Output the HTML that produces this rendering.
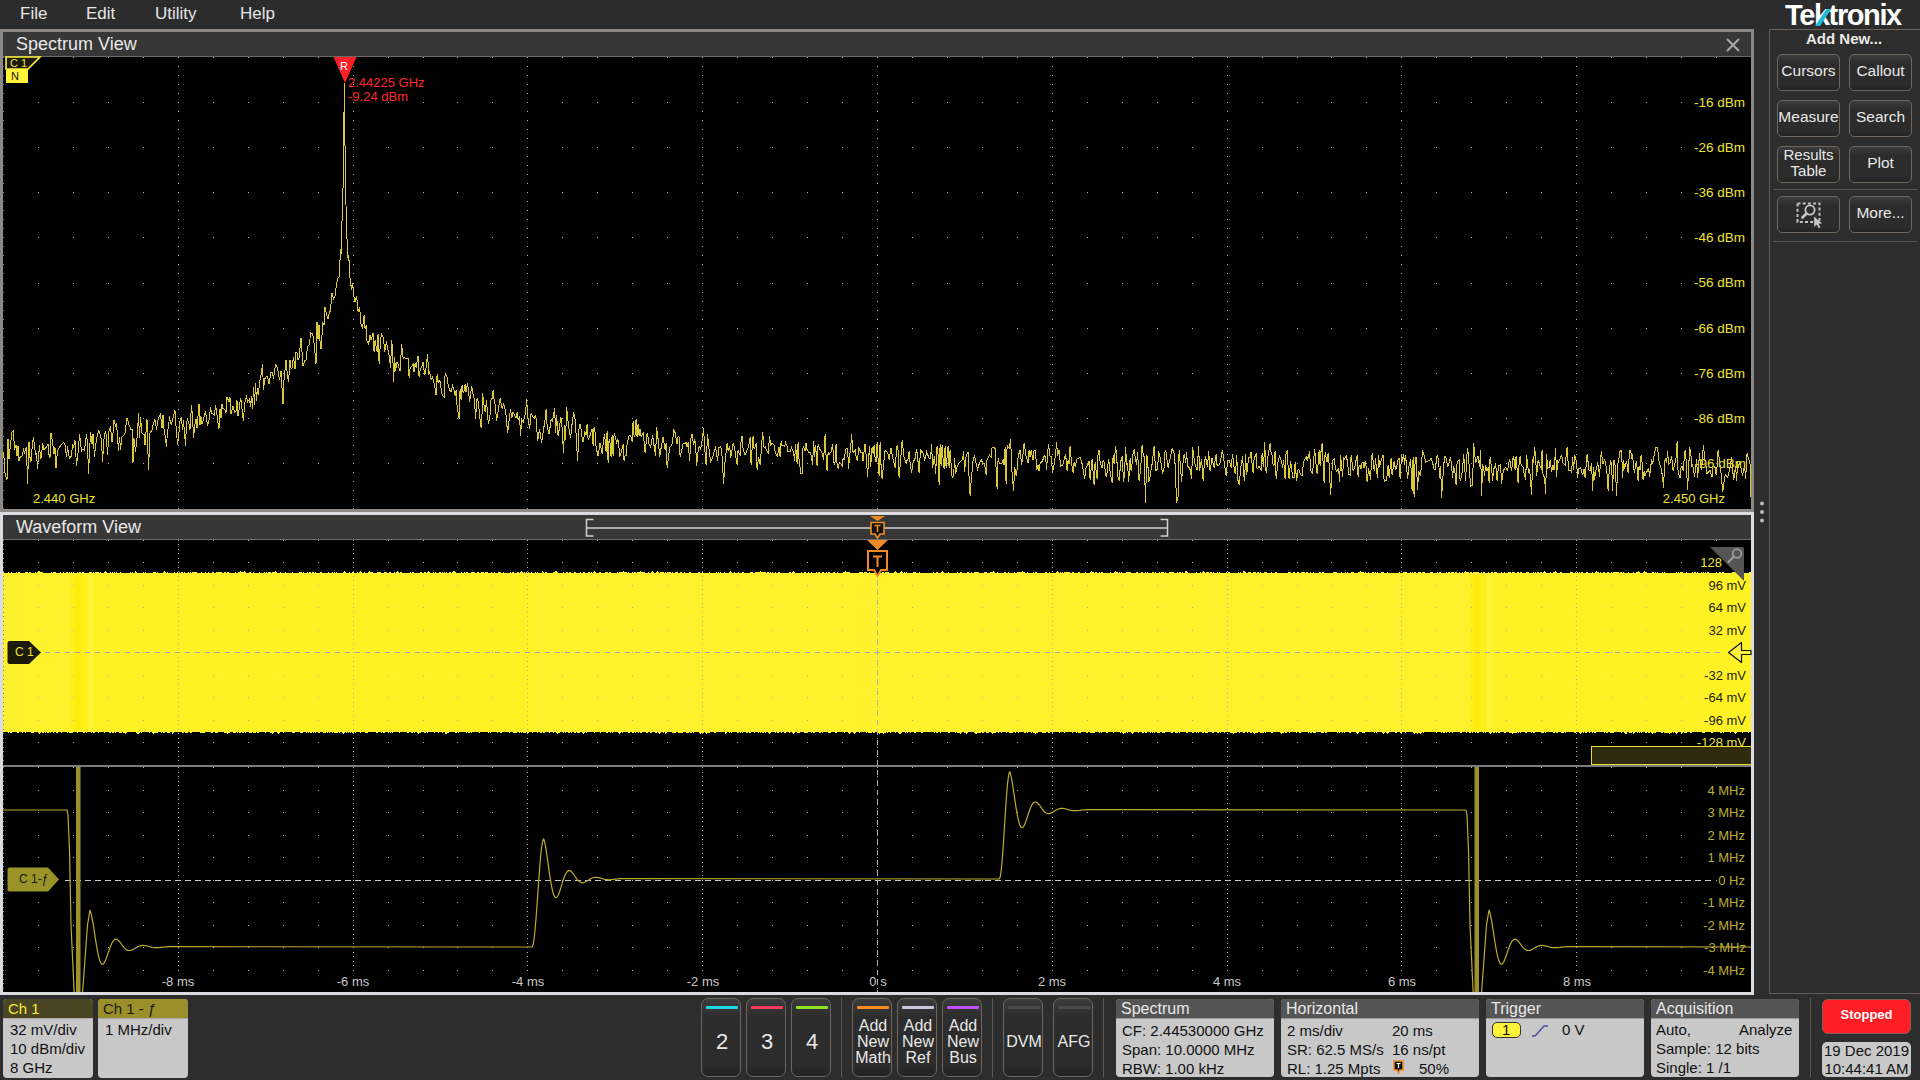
<!DOCTYPE html>
<html><head><meta charset="utf-8"><style>
html,body{margin:0;padding:0;}
body{width:1920px;height:1080px;background:#2d2d2d;position:relative;overflow:hidden;font-family:"Liberation Sans",sans-serif;}
.a{position:absolute;}
.t{position:absolute;white-space:nowrap;line-height:1;}
.btn{position:absolute;box-sizing:border-box;border:1px solid #6f665e;border-radius:5px;background:linear-gradient(#3c3c3c 0%,#2c2c2c 25%,#2c2c2c 85%,#232323 100%);color:#e8e8e8;text-align:center;}
.badge{position:absolute;box-sizing:border-box;border-radius:4px;overflow:hidden;background:#c8c8c8;}
</style></head><body>

<div class="a" style="left:0;top:0;width:1920px;height:29px;background:#2c2c2c"></div>
<div class="t" style="left:20px;top:5px;font-size:17px;color:#e6e6e6">File</div>
<div class="t" style="left:86px;top:5px;font-size:17px;color:#e6e6e6">Edit</div>
<div class="t" style="left:155px;top:5px;font-size:17px;color:#e6e6e6">Utility</div>
<div class="t" style="left:240px;top:5px;font-size:17px;color:#e6e6e6">Help</div>
<div class="a" style="left:0;top:29px;width:1754px;height:483px;background:#8c8886"></div>
<div class="a" style="left:3px;top:32px;width:1748px;height:24px;background:#373737"></div>
<div class="a" style="left:3px;top:56px;width:1748px;height:1px;background:#6a6a6a"></div>
<div class="t" style="left:16px;top:35px;font-size:18px;color:#e8e8e8">Spectrum View</div>
<svg class="a" style="left:1724px;top:36px" width="18" height="18"><path d="M3 3L15 15M15 3L3 15" stroke="#a8a8a8" stroke-width="2"/></svg>
<div class="a" style="left:3px;top:57px;width:1748px;height:452px;background:#000"></div>
<div class="a" style="left:0;top:512px;width:1754px;height:483px;background:#dcdce0"></div>
<div class="a" style="left:3px;top:515px;width:1748px;height:24px;background:#373737"></div>
<div class="a" style="left:3px;top:539px;width:1748px;height:1px;background:#6a6a6a"></div>
<div class="t" style="left:16px;top:518px;font-size:18px;color:#e8e8e8">Waveform View</div>
<div class="a" style="left:3px;top:540px;width:1748px;height:452px;background:#000"></div>
<div class="t" style="right:174px;top:457px;font-size:13.5px;color:#ece232;text-align:right">-96 dBm</div>
<svg class="a" style="left:0;top:0" width="1920" height="1080">
<path d="M38 57h1v1h-1zM73 57h1v1h-1zM108 57h1v1h-1zM143 57h1v1h-1zM178 57h1v1h-1zM213 57h1v1h-1zM248 57h1v1h-1zM283 57h1v1h-1zM318 57h1v1h-1zM353 57h1v1h-1zM388 57h1v1h-1zM423 57h1v1h-1zM457 57h1v1h-1zM492 57h1v1h-1zM527 57h1v1h-1zM562 57h1v1h-1zM597 57h1v1h-1zM632 57h1v1h-1zM667 57h1v1h-1zM702 57h1v1h-1zM737 57h1v1h-1zM772 57h1v1h-1zM807 57h1v1h-1zM842 57h1v1h-1zM877 57h1v1h-1zM912 57h1v1h-1zM947 57h1v1h-1zM982 57h1v1h-1zM1017 57h1v1h-1zM1052 57h1v1h-1zM1087 57h1v1h-1zM1122 57h1v1h-1zM1157 57h1v1h-1zM1192 57h1v1h-1zM1227 57h1v1h-1zM1262 57h1v1h-1zM1297 57h1v1h-1zM1331 57h1v1h-1zM1366 57h1v1h-1zM1401 57h1v1h-1zM1436 57h1v1h-1zM1471 57h1v1h-1zM1506 57h1v1h-1zM1541 57h1v1h-1zM1576 57h1v1h-1zM1611 57h1v1h-1zM1646 57h1v1h-1zM1681 57h1v1h-1zM1716 57h1v1h-1zM38 102h1v1h-1zM73 102h1v1h-1zM108 102h1v1h-1zM143 102h1v1h-1zM178 102h1v1h-1zM213 102h1v1h-1zM248 102h1v1h-1zM283 102h1v1h-1zM318 102h1v1h-1zM353 102h1v1h-1zM388 102h1v1h-1zM423 102h1v1h-1zM457 102h1v1h-1zM492 102h1v1h-1zM527 102h1v1h-1zM562 102h1v1h-1zM597 102h1v1h-1zM632 102h1v1h-1zM667 102h1v1h-1zM702 102h1v1h-1zM737 102h1v1h-1zM772 102h1v1h-1zM807 102h1v1h-1zM842 102h1v1h-1zM877 102h1v1h-1zM912 102h1v1h-1zM947 102h1v1h-1zM982 102h1v1h-1zM1017 102h1v1h-1zM1052 102h1v1h-1zM1087 102h1v1h-1zM1122 102h1v1h-1zM1157 102h1v1h-1zM1192 102h1v1h-1zM1227 102h1v1h-1zM1262 102h1v1h-1zM1297 102h1v1h-1zM1331 102h1v1h-1zM1366 102h1v1h-1zM1401 102h1v1h-1zM1436 102h1v1h-1zM1471 102h1v1h-1zM1506 102h1v1h-1zM1541 102h1v1h-1zM1576 102h1v1h-1zM1611 102h1v1h-1zM1646 102h1v1h-1zM1681 102h1v1h-1zM1716 102h1v1h-1zM38 147h1v1h-1zM73 147h1v1h-1zM108 147h1v1h-1zM143 147h1v1h-1zM178 147h1v1h-1zM213 147h1v1h-1zM248 147h1v1h-1zM283 147h1v1h-1zM318 147h1v1h-1zM353 147h1v1h-1zM388 147h1v1h-1zM423 147h1v1h-1zM457 147h1v1h-1zM492 147h1v1h-1zM527 147h1v1h-1zM562 147h1v1h-1zM597 147h1v1h-1zM632 147h1v1h-1zM667 147h1v1h-1zM702 147h1v1h-1zM737 147h1v1h-1zM772 147h1v1h-1zM807 147h1v1h-1zM842 147h1v1h-1zM877 147h1v1h-1zM912 147h1v1h-1zM947 147h1v1h-1zM982 147h1v1h-1zM1017 147h1v1h-1zM1052 147h1v1h-1zM1087 147h1v1h-1zM1122 147h1v1h-1zM1157 147h1v1h-1zM1192 147h1v1h-1zM1227 147h1v1h-1zM1262 147h1v1h-1zM1297 147h1v1h-1zM1331 147h1v1h-1zM1366 147h1v1h-1zM1401 147h1v1h-1zM1436 147h1v1h-1zM1471 147h1v1h-1zM1506 147h1v1h-1zM1541 147h1v1h-1zM1576 147h1v1h-1zM1611 147h1v1h-1zM1646 147h1v1h-1zM1681 147h1v1h-1zM1716 147h1v1h-1zM38 192h1v1h-1zM73 192h1v1h-1zM108 192h1v1h-1zM143 192h1v1h-1zM178 192h1v1h-1zM213 192h1v1h-1zM248 192h1v1h-1zM283 192h1v1h-1zM318 192h1v1h-1zM353 192h1v1h-1zM388 192h1v1h-1zM423 192h1v1h-1zM457 192h1v1h-1zM492 192h1v1h-1zM527 192h1v1h-1zM562 192h1v1h-1zM597 192h1v1h-1zM632 192h1v1h-1zM667 192h1v1h-1zM702 192h1v1h-1zM737 192h1v1h-1zM772 192h1v1h-1zM807 192h1v1h-1zM842 192h1v1h-1zM877 192h1v1h-1zM912 192h1v1h-1zM947 192h1v1h-1zM982 192h1v1h-1zM1017 192h1v1h-1zM1052 192h1v1h-1zM1087 192h1v1h-1zM1122 192h1v1h-1zM1157 192h1v1h-1zM1192 192h1v1h-1zM1227 192h1v1h-1zM1262 192h1v1h-1zM1297 192h1v1h-1zM1331 192h1v1h-1zM1366 192h1v1h-1zM1401 192h1v1h-1zM1436 192h1v1h-1zM1471 192h1v1h-1zM1506 192h1v1h-1zM1541 192h1v1h-1zM1576 192h1v1h-1zM1611 192h1v1h-1zM1646 192h1v1h-1zM1681 192h1v1h-1zM1716 192h1v1h-1zM38 237h1v1h-1zM73 237h1v1h-1zM108 237h1v1h-1zM143 237h1v1h-1zM178 237h1v1h-1zM213 237h1v1h-1zM248 237h1v1h-1zM283 237h1v1h-1zM318 237h1v1h-1zM353 237h1v1h-1zM388 237h1v1h-1zM423 237h1v1h-1zM457 237h1v1h-1zM492 237h1v1h-1zM527 237h1v1h-1zM562 237h1v1h-1zM597 237h1v1h-1zM632 237h1v1h-1zM667 237h1v1h-1zM702 237h1v1h-1zM737 237h1v1h-1zM772 237h1v1h-1zM807 237h1v1h-1zM842 237h1v1h-1zM877 237h1v1h-1zM912 237h1v1h-1zM947 237h1v1h-1zM982 237h1v1h-1zM1017 237h1v1h-1zM1052 237h1v1h-1zM1087 237h1v1h-1zM1122 237h1v1h-1zM1157 237h1v1h-1zM1192 237h1v1h-1zM1227 237h1v1h-1zM1262 237h1v1h-1zM1297 237h1v1h-1zM1331 237h1v1h-1zM1366 237h1v1h-1zM1401 237h1v1h-1zM1436 237h1v1h-1zM1471 237h1v1h-1zM1506 237h1v1h-1zM1541 237h1v1h-1zM1576 237h1v1h-1zM1611 237h1v1h-1zM1646 237h1v1h-1zM1681 237h1v1h-1zM1716 237h1v1h-1zM38 283h1v1h-1zM73 283h1v1h-1zM108 283h1v1h-1zM143 283h1v1h-1zM178 283h1v1h-1zM213 283h1v1h-1zM248 283h1v1h-1zM283 283h1v1h-1zM318 283h1v1h-1zM353 283h1v1h-1zM388 283h1v1h-1zM423 283h1v1h-1zM457 283h1v1h-1zM492 283h1v1h-1zM527 283h1v1h-1zM562 283h1v1h-1zM597 283h1v1h-1zM632 283h1v1h-1zM667 283h1v1h-1zM702 283h1v1h-1zM737 283h1v1h-1zM772 283h1v1h-1zM807 283h1v1h-1zM842 283h1v1h-1zM877 283h1v1h-1zM912 283h1v1h-1zM947 283h1v1h-1zM982 283h1v1h-1zM1017 283h1v1h-1zM1052 283h1v1h-1zM1087 283h1v1h-1zM1122 283h1v1h-1zM1157 283h1v1h-1zM1192 283h1v1h-1zM1227 283h1v1h-1zM1262 283h1v1h-1zM1297 283h1v1h-1zM1331 283h1v1h-1zM1366 283h1v1h-1zM1401 283h1v1h-1zM1436 283h1v1h-1zM1471 283h1v1h-1zM1506 283h1v1h-1zM1541 283h1v1h-1zM1576 283h1v1h-1zM1611 283h1v1h-1zM1646 283h1v1h-1zM1681 283h1v1h-1zM1716 283h1v1h-1zM38 328h1v1h-1zM73 328h1v1h-1zM108 328h1v1h-1zM143 328h1v1h-1zM178 328h1v1h-1zM213 328h1v1h-1zM248 328h1v1h-1zM283 328h1v1h-1zM318 328h1v1h-1zM353 328h1v1h-1zM388 328h1v1h-1zM423 328h1v1h-1zM457 328h1v1h-1zM492 328h1v1h-1zM527 328h1v1h-1zM562 328h1v1h-1zM597 328h1v1h-1zM632 328h1v1h-1zM667 328h1v1h-1zM702 328h1v1h-1zM737 328h1v1h-1zM772 328h1v1h-1zM807 328h1v1h-1zM842 328h1v1h-1zM877 328h1v1h-1zM912 328h1v1h-1zM947 328h1v1h-1zM982 328h1v1h-1zM1017 328h1v1h-1zM1052 328h1v1h-1zM1087 328h1v1h-1zM1122 328h1v1h-1zM1157 328h1v1h-1zM1192 328h1v1h-1zM1227 328h1v1h-1zM1262 328h1v1h-1zM1297 328h1v1h-1zM1331 328h1v1h-1zM1366 328h1v1h-1zM1401 328h1v1h-1zM1436 328h1v1h-1zM1471 328h1v1h-1zM1506 328h1v1h-1zM1541 328h1v1h-1zM1576 328h1v1h-1zM1611 328h1v1h-1zM1646 328h1v1h-1zM1681 328h1v1h-1zM1716 328h1v1h-1zM38 373h1v1h-1zM73 373h1v1h-1zM108 373h1v1h-1zM143 373h1v1h-1zM178 373h1v1h-1zM213 373h1v1h-1zM248 373h1v1h-1zM283 373h1v1h-1zM318 373h1v1h-1zM353 373h1v1h-1zM388 373h1v1h-1zM423 373h1v1h-1zM457 373h1v1h-1zM492 373h1v1h-1zM527 373h1v1h-1zM562 373h1v1h-1zM597 373h1v1h-1zM632 373h1v1h-1zM667 373h1v1h-1zM702 373h1v1h-1zM737 373h1v1h-1zM772 373h1v1h-1zM807 373h1v1h-1zM842 373h1v1h-1zM877 373h1v1h-1zM912 373h1v1h-1zM947 373h1v1h-1zM982 373h1v1h-1zM1017 373h1v1h-1zM1052 373h1v1h-1zM1087 373h1v1h-1zM1122 373h1v1h-1zM1157 373h1v1h-1zM1192 373h1v1h-1zM1227 373h1v1h-1zM1262 373h1v1h-1zM1297 373h1v1h-1zM1331 373h1v1h-1zM1366 373h1v1h-1zM1401 373h1v1h-1zM1436 373h1v1h-1zM1471 373h1v1h-1zM1506 373h1v1h-1zM1541 373h1v1h-1zM1576 373h1v1h-1zM1611 373h1v1h-1zM1646 373h1v1h-1zM1681 373h1v1h-1zM1716 373h1v1h-1zM38 418h1v1h-1zM73 418h1v1h-1zM108 418h1v1h-1zM143 418h1v1h-1zM178 418h1v1h-1zM213 418h1v1h-1zM248 418h1v1h-1zM283 418h1v1h-1zM318 418h1v1h-1zM353 418h1v1h-1zM388 418h1v1h-1zM423 418h1v1h-1zM457 418h1v1h-1zM492 418h1v1h-1zM527 418h1v1h-1zM562 418h1v1h-1zM597 418h1v1h-1zM632 418h1v1h-1zM667 418h1v1h-1zM702 418h1v1h-1zM737 418h1v1h-1zM772 418h1v1h-1zM807 418h1v1h-1zM842 418h1v1h-1zM877 418h1v1h-1zM912 418h1v1h-1zM947 418h1v1h-1zM982 418h1v1h-1zM1017 418h1v1h-1zM1052 418h1v1h-1zM1087 418h1v1h-1zM1122 418h1v1h-1zM1157 418h1v1h-1zM1192 418h1v1h-1zM1227 418h1v1h-1zM1262 418h1v1h-1zM1297 418h1v1h-1zM1331 418h1v1h-1zM1366 418h1v1h-1zM1401 418h1v1h-1zM1436 418h1v1h-1zM1471 418h1v1h-1zM1506 418h1v1h-1zM1541 418h1v1h-1zM1576 418h1v1h-1zM1611 418h1v1h-1zM1646 418h1v1h-1zM1681 418h1v1h-1zM1716 418h1v1h-1zM38 463h1v1h-1zM73 463h1v1h-1zM108 463h1v1h-1zM143 463h1v1h-1zM178 463h1v1h-1zM213 463h1v1h-1zM248 463h1v1h-1zM283 463h1v1h-1zM318 463h1v1h-1zM353 463h1v1h-1zM388 463h1v1h-1zM423 463h1v1h-1zM457 463h1v1h-1zM492 463h1v1h-1zM527 463h1v1h-1zM562 463h1v1h-1zM597 463h1v1h-1zM632 463h1v1h-1zM667 463h1v1h-1zM702 463h1v1h-1zM737 463h1v1h-1zM772 463h1v1h-1zM807 463h1v1h-1zM842 463h1v1h-1zM877 463h1v1h-1zM912 463h1v1h-1zM947 463h1v1h-1zM982 463h1v1h-1zM1017 463h1v1h-1zM1052 463h1v1h-1zM1087 463h1v1h-1zM1122 463h1v1h-1zM1157 463h1v1h-1zM1192 463h1v1h-1zM1227 463h1v1h-1zM1262 463h1v1h-1zM1297 463h1v1h-1zM1331 463h1v1h-1zM1366 463h1v1h-1zM1401 463h1v1h-1zM1436 463h1v1h-1zM1471 463h1v1h-1zM1506 463h1v1h-1zM1541 463h1v1h-1zM1576 463h1v1h-1zM1611 463h1v1h-1zM1646 463h1v1h-1zM1681 463h1v1h-1zM1716 463h1v1h-1z" fill="#b0b0b0"/>
<path d="M178 57h1v1h-1zM178 66h1v1h-1zM178 75h1v1h-1zM178 84h1v1h-1zM178 93h1v1h-1zM178 102h1v1h-1zM178 111h1v1h-1zM178 120h1v1h-1zM178 129h1v1h-1zM178 138h1v1h-1zM178 147h1v1h-1zM178 156h1v1h-1zM178 165h1v1h-1zM178 174h1v1h-1zM178 183h1v1h-1zM178 192h1v1h-1zM178 201h1v1h-1zM178 210h1v1h-1zM178 219h1v1h-1zM178 228h1v1h-1zM178 237h1v1h-1zM178 246h1v1h-1zM178 255h1v1h-1zM178 264h1v1h-1zM178 273h1v1h-1zM178 283h1v1h-1zM178 292h1v1h-1zM178 301h1v1h-1zM178 310h1v1h-1zM178 319h1v1h-1zM178 328h1v1h-1zM178 337h1v1h-1zM178 346h1v1h-1zM178 355h1v1h-1zM178 364h1v1h-1zM178 373h1v1h-1zM178 382h1v1h-1zM178 391h1v1h-1zM178 400h1v1h-1zM178 409h1v1h-1zM178 418h1v1h-1zM178 427h1v1h-1zM178 436h1v1h-1zM178 445h1v1h-1zM178 454h1v1h-1zM178 463h1v1h-1zM178 472h1v1h-1zM178 481h1v1h-1zM178 490h1v1h-1zM178 499h1v1h-1zM178 508h1v1h-1zM353 57h1v1h-1zM353 66h1v1h-1zM353 75h1v1h-1zM353 84h1v1h-1zM353 93h1v1h-1zM353 102h1v1h-1zM353 111h1v1h-1zM353 120h1v1h-1zM353 129h1v1h-1zM353 138h1v1h-1zM353 147h1v1h-1zM353 156h1v1h-1zM353 165h1v1h-1zM353 174h1v1h-1zM353 183h1v1h-1zM353 192h1v1h-1zM353 201h1v1h-1zM353 210h1v1h-1zM353 219h1v1h-1zM353 228h1v1h-1zM353 237h1v1h-1zM353 246h1v1h-1zM353 255h1v1h-1zM353 264h1v1h-1zM353 273h1v1h-1zM353 283h1v1h-1zM353 292h1v1h-1zM353 301h1v1h-1zM353 310h1v1h-1zM353 319h1v1h-1zM353 328h1v1h-1zM353 337h1v1h-1zM353 346h1v1h-1zM353 355h1v1h-1zM353 364h1v1h-1zM353 373h1v1h-1zM353 382h1v1h-1zM353 391h1v1h-1zM353 400h1v1h-1zM353 409h1v1h-1zM353 418h1v1h-1zM353 427h1v1h-1zM353 436h1v1h-1zM353 445h1v1h-1zM353 454h1v1h-1zM353 463h1v1h-1zM353 472h1v1h-1zM353 481h1v1h-1zM353 490h1v1h-1zM353 499h1v1h-1zM353 508h1v1h-1zM527 57h1v1h-1zM527 66h1v1h-1zM527 75h1v1h-1zM527 84h1v1h-1zM527 93h1v1h-1zM527 102h1v1h-1zM527 111h1v1h-1zM527 120h1v1h-1zM527 129h1v1h-1zM527 138h1v1h-1zM527 147h1v1h-1zM527 156h1v1h-1zM527 165h1v1h-1zM527 174h1v1h-1zM527 183h1v1h-1zM527 192h1v1h-1zM527 201h1v1h-1zM527 210h1v1h-1zM527 219h1v1h-1zM527 228h1v1h-1zM527 237h1v1h-1zM527 246h1v1h-1zM527 255h1v1h-1zM527 264h1v1h-1zM527 273h1v1h-1zM527 283h1v1h-1zM527 292h1v1h-1zM527 301h1v1h-1zM527 310h1v1h-1zM527 319h1v1h-1zM527 328h1v1h-1zM527 337h1v1h-1zM527 346h1v1h-1zM527 355h1v1h-1zM527 364h1v1h-1zM527 373h1v1h-1zM527 382h1v1h-1zM527 391h1v1h-1zM527 400h1v1h-1zM527 409h1v1h-1zM527 418h1v1h-1zM527 427h1v1h-1zM527 436h1v1h-1zM527 445h1v1h-1zM527 454h1v1h-1zM527 463h1v1h-1zM527 472h1v1h-1zM527 481h1v1h-1zM527 490h1v1h-1zM527 499h1v1h-1zM527 508h1v1h-1zM702 57h1v1h-1zM702 66h1v1h-1zM702 75h1v1h-1zM702 84h1v1h-1zM702 93h1v1h-1zM702 102h1v1h-1zM702 111h1v1h-1zM702 120h1v1h-1zM702 129h1v1h-1zM702 138h1v1h-1zM702 147h1v1h-1zM702 156h1v1h-1zM702 165h1v1h-1zM702 174h1v1h-1zM702 183h1v1h-1zM702 192h1v1h-1zM702 201h1v1h-1zM702 210h1v1h-1zM702 219h1v1h-1zM702 228h1v1h-1zM702 237h1v1h-1zM702 246h1v1h-1zM702 255h1v1h-1zM702 264h1v1h-1zM702 273h1v1h-1zM702 283h1v1h-1zM702 292h1v1h-1zM702 301h1v1h-1zM702 310h1v1h-1zM702 319h1v1h-1zM702 328h1v1h-1zM702 337h1v1h-1zM702 346h1v1h-1zM702 355h1v1h-1zM702 364h1v1h-1zM702 373h1v1h-1zM702 382h1v1h-1zM702 391h1v1h-1zM702 400h1v1h-1zM702 409h1v1h-1zM702 418h1v1h-1zM702 427h1v1h-1zM702 436h1v1h-1zM702 445h1v1h-1zM702 454h1v1h-1zM702 463h1v1h-1zM702 472h1v1h-1zM702 481h1v1h-1zM702 490h1v1h-1zM702 499h1v1h-1zM702 508h1v1h-1zM877 57h1v1h-1zM877 66h1v1h-1zM877 75h1v1h-1zM877 84h1v1h-1zM877 93h1v1h-1zM877 102h1v1h-1zM877 111h1v1h-1zM877 120h1v1h-1zM877 129h1v1h-1zM877 138h1v1h-1zM877 147h1v1h-1zM877 156h1v1h-1zM877 165h1v1h-1zM877 174h1v1h-1zM877 183h1v1h-1zM877 192h1v1h-1zM877 201h1v1h-1zM877 210h1v1h-1zM877 219h1v1h-1zM877 228h1v1h-1zM877 237h1v1h-1zM877 246h1v1h-1zM877 255h1v1h-1zM877 264h1v1h-1zM877 273h1v1h-1zM877 283h1v1h-1zM877 292h1v1h-1zM877 301h1v1h-1zM877 310h1v1h-1zM877 319h1v1h-1zM877 328h1v1h-1zM877 337h1v1h-1zM877 346h1v1h-1zM877 355h1v1h-1zM877 364h1v1h-1zM877 373h1v1h-1zM877 382h1v1h-1zM877 391h1v1h-1zM877 400h1v1h-1zM877 409h1v1h-1zM877 418h1v1h-1zM877 427h1v1h-1zM877 436h1v1h-1zM877 445h1v1h-1zM877 454h1v1h-1zM877 463h1v1h-1zM877 472h1v1h-1zM877 481h1v1h-1zM877 490h1v1h-1zM877 499h1v1h-1zM877 508h1v1h-1zM1052 57h1v1h-1zM1052 66h1v1h-1zM1052 75h1v1h-1zM1052 84h1v1h-1zM1052 93h1v1h-1zM1052 102h1v1h-1zM1052 111h1v1h-1zM1052 120h1v1h-1zM1052 129h1v1h-1zM1052 138h1v1h-1zM1052 147h1v1h-1zM1052 156h1v1h-1zM1052 165h1v1h-1zM1052 174h1v1h-1zM1052 183h1v1h-1zM1052 192h1v1h-1zM1052 201h1v1h-1zM1052 210h1v1h-1zM1052 219h1v1h-1zM1052 228h1v1h-1zM1052 237h1v1h-1zM1052 246h1v1h-1zM1052 255h1v1h-1zM1052 264h1v1h-1zM1052 273h1v1h-1zM1052 283h1v1h-1zM1052 292h1v1h-1zM1052 301h1v1h-1zM1052 310h1v1h-1zM1052 319h1v1h-1zM1052 328h1v1h-1zM1052 337h1v1h-1zM1052 346h1v1h-1zM1052 355h1v1h-1zM1052 364h1v1h-1zM1052 373h1v1h-1zM1052 382h1v1h-1zM1052 391h1v1h-1zM1052 400h1v1h-1zM1052 409h1v1h-1zM1052 418h1v1h-1zM1052 427h1v1h-1zM1052 436h1v1h-1zM1052 445h1v1h-1zM1052 454h1v1h-1zM1052 463h1v1h-1zM1052 472h1v1h-1zM1052 481h1v1h-1zM1052 490h1v1h-1zM1052 499h1v1h-1zM1052 508h1v1h-1zM1227 57h1v1h-1zM1227 66h1v1h-1zM1227 75h1v1h-1zM1227 84h1v1h-1zM1227 93h1v1h-1zM1227 102h1v1h-1zM1227 111h1v1h-1zM1227 120h1v1h-1zM1227 129h1v1h-1zM1227 138h1v1h-1zM1227 147h1v1h-1zM1227 156h1v1h-1zM1227 165h1v1h-1zM1227 174h1v1h-1zM1227 183h1v1h-1zM1227 192h1v1h-1zM1227 201h1v1h-1zM1227 210h1v1h-1zM1227 219h1v1h-1zM1227 228h1v1h-1zM1227 237h1v1h-1zM1227 246h1v1h-1zM1227 255h1v1h-1zM1227 264h1v1h-1zM1227 273h1v1h-1zM1227 283h1v1h-1zM1227 292h1v1h-1zM1227 301h1v1h-1zM1227 310h1v1h-1zM1227 319h1v1h-1zM1227 328h1v1h-1zM1227 337h1v1h-1zM1227 346h1v1h-1zM1227 355h1v1h-1zM1227 364h1v1h-1zM1227 373h1v1h-1zM1227 382h1v1h-1zM1227 391h1v1h-1zM1227 400h1v1h-1zM1227 409h1v1h-1zM1227 418h1v1h-1zM1227 427h1v1h-1zM1227 436h1v1h-1zM1227 445h1v1h-1zM1227 454h1v1h-1zM1227 463h1v1h-1zM1227 472h1v1h-1zM1227 481h1v1h-1zM1227 490h1v1h-1zM1227 499h1v1h-1zM1227 508h1v1h-1zM1401 57h1v1h-1zM1401 66h1v1h-1zM1401 75h1v1h-1zM1401 84h1v1h-1zM1401 93h1v1h-1zM1401 102h1v1h-1zM1401 111h1v1h-1zM1401 120h1v1h-1zM1401 129h1v1h-1zM1401 138h1v1h-1zM1401 147h1v1h-1zM1401 156h1v1h-1zM1401 165h1v1h-1zM1401 174h1v1h-1zM1401 183h1v1h-1zM1401 192h1v1h-1zM1401 201h1v1h-1zM1401 210h1v1h-1zM1401 219h1v1h-1zM1401 228h1v1h-1zM1401 237h1v1h-1zM1401 246h1v1h-1zM1401 255h1v1h-1zM1401 264h1v1h-1zM1401 273h1v1h-1zM1401 283h1v1h-1zM1401 292h1v1h-1zM1401 301h1v1h-1zM1401 310h1v1h-1zM1401 319h1v1h-1zM1401 328h1v1h-1zM1401 337h1v1h-1zM1401 346h1v1h-1zM1401 355h1v1h-1zM1401 364h1v1h-1zM1401 373h1v1h-1zM1401 382h1v1h-1zM1401 391h1v1h-1zM1401 400h1v1h-1zM1401 409h1v1h-1zM1401 418h1v1h-1zM1401 427h1v1h-1zM1401 436h1v1h-1zM1401 445h1v1h-1zM1401 454h1v1h-1zM1401 463h1v1h-1zM1401 472h1v1h-1zM1401 481h1v1h-1zM1401 490h1v1h-1zM1401 499h1v1h-1zM1401 508h1v1h-1zM1576 57h1v1h-1zM1576 66h1v1h-1zM1576 75h1v1h-1zM1576 84h1v1h-1zM1576 93h1v1h-1zM1576 102h1v1h-1zM1576 111h1v1h-1zM1576 120h1v1h-1zM1576 129h1v1h-1zM1576 138h1v1h-1zM1576 147h1v1h-1zM1576 156h1v1h-1zM1576 165h1v1h-1zM1576 174h1v1h-1zM1576 183h1v1h-1zM1576 192h1v1h-1zM1576 201h1v1h-1zM1576 210h1v1h-1zM1576 219h1v1h-1zM1576 228h1v1h-1zM1576 237h1v1h-1zM1576 246h1v1h-1zM1576 255h1v1h-1zM1576 264h1v1h-1zM1576 273h1v1h-1zM1576 283h1v1h-1zM1576 292h1v1h-1zM1576 301h1v1h-1zM1576 310h1v1h-1zM1576 319h1v1h-1zM1576 328h1v1h-1zM1576 337h1v1h-1zM1576 346h1v1h-1zM1576 355h1v1h-1zM1576 364h1v1h-1zM1576 373h1v1h-1zM1576 382h1v1h-1zM1576 391h1v1h-1zM1576 400h1v1h-1zM1576 409h1v1h-1zM1576 418h1v1h-1zM1576 427h1v1h-1zM1576 436h1v1h-1zM1576 445h1v1h-1zM1576 454h1v1h-1zM1576 463h1v1h-1zM1576 472h1v1h-1zM1576 481h1v1h-1zM1576 490h1v1h-1zM1576 499h1v1h-1zM1576 508h1v1h-1z" fill="#b0b0b0"/>
<path d="M3 57h1v1h-1zM3 66h1v1h-1zM3 75h1v1h-1zM3 84h1v1h-1zM3 93h1v1h-1zM3 102h1v1h-1zM3 111h1v1h-1zM3 120h1v1h-1zM3 129h1v1h-1zM3 138h1v1h-1zM3 147h1v1h-1zM3 156h1v1h-1zM3 165h1v1h-1zM3 174h1v1h-1zM3 183h1v1h-1zM3 192h1v1h-1zM3 201h1v1h-1zM3 210h1v1h-1zM3 219h1v1h-1zM3 228h1v1h-1zM3 237h1v1h-1zM3 246h1v1h-1zM3 255h1v1h-1zM3 264h1v1h-1zM3 273h1v1h-1zM3 283h1v1h-1zM3 292h1v1h-1zM3 301h1v1h-1zM3 310h1v1h-1zM3 319h1v1h-1zM3 328h1v1h-1zM3 337h1v1h-1zM3 346h1v1h-1zM3 355h1v1h-1zM3 364h1v1h-1zM3 373h1v1h-1zM3 382h1v1h-1zM3 391h1v1h-1zM3 400h1v1h-1zM3 409h1v1h-1zM3 418h1v1h-1zM3 427h1v1h-1zM3 436h1v1h-1zM3 445h1v1h-1zM3 454h1v1h-1zM3 463h1v1h-1zM3 472h1v1h-1zM3 481h1v1h-1zM3 490h1v1h-1zM3 499h1v1h-1zM3 508h1v1h-1z" fill="#808080"/>
<polyline points="3.0,452.0 4.0,457.8 5.0,472.8 7.0,480.2 8.0,438.6 9.0,459.1 10.0,448.9 12.0,431.7 13.5,430.7 14.5,450.2 16.0,444.9 17.0,456.1 18.0,445.6 19.0,460.9 20.0,457.5 21.0,456.5 22.0,456.3 23.5,450.2 24.5,453.6 25.5,448.3 26.5,447.3 27.5,483.6 29.0,441.7 30.0,457.5 31.0,461.6 32.5,442.8 33.5,437.5 35.5,454.5 36.5,453.8 37.5,468.5 39.5,445.4 40.5,458.6 41.5,457.5 42.5,442.6 44.0,450.1 45.0,448.4 46.0,447.7 48.0,443.7 49.0,454.5 50.0,457.7 51.0,432.7 52.5,442.0 54.0,454.1 55.0,447.3 56.0,468.2 57.5,450.6 59.0,447.9 60.0,446.5 61.0,445.3 63.0,443.0 64.0,442.8 65.0,445.4 66.5,457.3 67.5,446.3 69.5,459.2 70.5,456.2 71.5,456.1 72.5,443.7 73.5,447.4 75.0,440.4 76.5,465.6 78.5,449.0 79.5,434.0 81.5,451.0 82.5,449.2 84.5,450.0 86.5,434.2 87.5,443.3 88.5,474.2 90.5,432.4 92.0,444.2 93.0,434.1 94.5,456.8 95.5,445.5 97.0,436.8 98.5,431.0 99.5,432.0 101.5,439.9 102.5,461.6 104.0,439.2 105.5,430.8 106.5,437.8 107.5,454.9 109.0,431.4 110.5,425.8 112.0,442.4 113.0,433.2 114.0,420.2 115.5,425.9 116.5,422.8 117.5,437.0 118.5,450.5 119.5,436.6 120.5,449.7 122.0,436.8 124.0,435.3 125.0,432.8 127.0,417.7 129.0,424.6 131.0,429.5 132.0,428.8 133.0,463.0 134.0,438.5 135.5,451.7 137.5,433.9 138.5,413.3 139.5,437.7 140.5,417.2 142.0,433.2 144.0,434.4 145.0,445.2 147.0,419.4 148.5,470.4 150.0,433.1 152.0,429.8 153.0,424.9 155.0,419.6 156.5,429.5 157.5,423.0 158.5,417.9 160.5,414.0 162.0,428.2 163.0,415.1 164.0,429.2 165.0,434.5 166.5,446.5 167.5,431.2 168.5,427.6 169.5,415.9 170.5,423.5 171.5,424.4 172.5,419.3 173.5,416.2 175.0,410.4 176.0,425.8 177.5,444.6 178.5,436.9 180.0,421.4 181.5,417.0 182.5,430.2 183.5,420.1 185.5,445.5 186.5,422.8 187.5,419.6 189.0,424.1 190.0,429.8 191.5,405.4 192.5,416.5 193.5,437.8 195.0,423.8 196.0,419.3 197.0,427.9 199.0,404.1 200.0,425.1 201.0,416.5 202.0,423.8 203.5,419.3 205.5,411.5 207.5,425.7 209.5,418.0 210.5,407.0 211.5,412.9 213.5,414.4 214.5,415.6 215.5,405.1 216.5,411.0 217.5,419.2 219.0,428.9 220.0,408.8 221.0,418.1 222.0,404.2 223.0,408.5 225.0,409.9 226.0,412.7 227.0,396.6 229.0,402.3 230.0,397.4 231.0,413.6 233.0,405.9 234.5,412.5 236.0,410.9 237.0,400.3 238.0,416.1 239.5,406.8 240.5,397.8 241.5,403.1 242.5,413.8 243.5,421.4 244.5,404.2 246.5,395.5 247.5,402.1 249.5,399.0 250.5,407.3 251.5,395.7 252.5,409.3 253.5,386.7 254.5,405.0 255.5,383.2 256.5,400.5 257.5,388.0 258.5,395.2 259.5,380.7 260.5,379.1 262.5,364.3 263.5,390.0 264.5,379.8 265.5,377.3 267.5,376.5 269.0,384.2 271.0,372.3 272.5,372.4 273.5,378.7 275.5,365.1 277.5,367.4 279.5,379.8 281.0,371.2 283.0,404.3 284.0,380.0 286.0,360.1 287.0,371.2 288.5,382.3 290.0,360.2 291.0,368.2 292.0,368.2 293.5,356.7 295.0,368.9 296.0,351.8 297.0,352.9 298.0,360.2 299.0,358.5 301.0,337.7 302.0,351.9 303.0,366.3 305.0,360.1 306.0,360.2 307.5,346.6 309.5,344.7 310.5,332.7 312.5,333.5 313.5,339.0 314.5,347.6 316.0,363.6 317.0,322.1 318.0,338.9 319.0,324.7 320.5,348.7 321.5,348.7 322.5,322.9 324.0,325.1 325.0,307.4 326.5,314.5 328.0,319.4 329.0,314.4 330.5,310.1 332.0,293.4 333.5,298.6 335.0,295.9 336.0,288.2 337.5,279.1 339.0,276.8 340.0,260.6 340.4,252.4 340.7,248.7 341.1,253.8 341.4,233.0 341.8,233.7 342.1,216.1 342.5,207.4 342.8,193.2 343.2,183.3 343.5,168.8 343.9,132.1 344.2,83.0 344.6,105.4 344.9,138.2 345.3,167.1 345.6,185.8 346.0,205.4 346.3,218.3 346.7,226.6 347.0,238.8 347.4,246.7 347.7,248.4 348.1,261.3 348.4,255.8 348.8,254.8 349.1,261.8 350.1,279.1 351.6,289.7 352.6,282.6 353.6,294.7 355.1,302.0 356.6,295.6 358.1,311.6 359.6,307.6 361.1,325.0 362.6,327.9 364.1,315.3 365.1,329.3 366.1,325.3 367.1,342.0 368.6,344.1 370.1,334.7 371.1,340.1 373.1,332.8 374.1,352.4 375.1,340.3 377.1,351.8 378.1,333.9 379.1,363.9 380.6,338.9 381.6,334.4 383.6,338.2 384.6,351.5 385.6,346.9 386.6,341.2 387.6,349.4 388.6,351.7 390.6,367.6 391.6,340.2 392.6,349.4 393.6,382.2 394.6,356.8 395.6,371.3 396.6,362.2 397.6,362.4 399.1,368.2 400.1,370.6 401.6,344.4 403.1,358.2 404.1,357.5 406.1,358.3 408.1,358.4 409.1,377.7 410.1,368.6 411.1,367.0 413.1,364.3 414.1,372.2 415.1,363.4 416.1,367.5 418.1,355.6 419.1,377.4 420.1,370.5 422.1,365.8 423.1,362.2 424.6,375.2 425.6,372.6 426.6,362.0 427.6,353.8 428.6,373.6 429.6,371.8 431.1,379.7 432.6,377.0 433.6,381.8 434.6,385.6 436.1,395.4 437.1,373.8 438.1,382.7 439.1,380.2 440.1,381.8 442.1,394.7 444.1,397.0 445.1,373.7 447.1,377.5 448.1,385.0 449.6,389.8 451.1,391.9 452.6,385.4 454.1,389.9 455.1,395.9 456.1,390.5 457.1,406.4 459.1,418.8 460.1,388.7 461.1,399.7 462.1,384.9 463.1,392.4 464.1,390.7 465.1,384.1 466.1,392.4 467.6,382.8 469.6,401.6 470.6,394.8 471.6,385.6 473.1,394.4 474.6,400.7 475.6,419.4 476.6,400.2 477.6,398.4 478.6,405.0 480.6,425.0 481.6,428.4 482.6,393.1 484.1,405.8 485.1,411.8 486.6,400.2 487.6,417.3 488.6,423.9 490.1,414.2 491.1,398.2 492.1,398.7 493.1,390.1 494.1,399.8 495.1,404.2 496.6,420.5 497.6,415.5 499.1,404.1 500.1,398.2 502.1,408.2 503.6,404.2 505.6,410.4 507.6,433.2 509.6,415.4 510.6,409.4 511.6,418.4 513.1,412.1 515.1,416.0 516.1,417.7 517.1,412.2 518.1,419.9 519.6,416.9 520.6,436.1 521.6,419.7 523.1,422.5 524.1,418.3 525.6,412.6 526.6,398.8 527.6,414.8 529.6,429.0 531.1,412.7 533.1,417.6 534.1,418.2 535.1,415.4 536.1,418.5 537.6,441.4 539.6,428.8 541.6,443.0 543.6,428.5 544.6,423.9 546.1,409.2 547.1,425.6 549.1,434.3 551.1,419.4 552.6,421.1 554.6,407.9 555.6,433.2 556.6,414.7 558.1,436.4 559.6,426.8 560.6,417.3 561.6,420.0 562.6,437.3 563.6,452.8 564.6,424.7 565.6,439.7 566.6,406.9 568.6,426.5 570.6,437.8 572.1,423.6 573.6,412.3 575.1,419.4 576.1,434.4 577.6,461.1 579.1,427.3 580.1,423.9 581.1,429.4 582.6,441.2 583.6,441.9 584.6,431.0 586.1,435.1 587.1,424.4 588.1,439.6 590.1,435.3 592.1,429.0 593.1,445.8 594.1,426.8 595.1,432.5 596.1,447.4 598.1,456.3 600.1,442.7 602.1,453.7 603.6,439.3 604.6,434.1 606.1,452.2 607.1,430.8 608.1,463.3 609.1,439.0 610.1,443.2 611.1,457.3 612.1,435.2 613.1,455.7 614.1,433.6 615.1,436.1 616.6,442.6 617.6,439.9 618.6,441.4 619.6,457.4 621.1,452.5 623.1,444.3 624.1,461.0 625.1,455.5 626.1,455.3 627.1,444.3 629.1,435.7 630.6,435.6 632.1,441.7 633.1,420.9 634.1,436.8 635.1,434.8 636.1,418.7 637.1,437.4 638.1,424.0 639.1,435.5 640.1,428.8 641.1,437.0 643.1,432.7 644.1,441.9 645.1,453.0 647.1,433.5 648.1,437.5 649.1,444.6 650.6,447.4 652.6,435.0 653.6,442.9 655.6,455.5 656.6,427.5 658.6,443.1 659.6,457.4 661.6,444.8 663.1,436.9 665.1,449.8 666.1,443.0 667.1,467.6 668.6,456.7 669.6,447.2 670.6,446.7 672.6,442.4 673.6,429.0 675.1,432.8 677.1,444.1 678.1,435.9 679.1,437.4 680.1,457.1 682.1,448.2 683.1,443.2 684.1,443.6 686.1,442.7 687.1,446.9 688.1,442.3 689.6,460.5 691.1,436.7 692.1,434.3 693.6,444.7 694.6,439.6 695.6,444.2 696.6,466.2 698.1,450.9 699.1,446.4 700.6,449.0 701.6,443.8 703.6,428.5 704.6,447.2 706.1,465.3 707.6,433.9 708.6,445.4 710.6,462.4 712.6,457.3 714.6,449.6 715.6,447.2 717.6,461.4 718.6,447.6 720.1,446.8 721.6,448.6 723.6,483.7 725.1,460.8 727.1,443.0 728.1,450.8 729.6,445.7 730.6,457.0 731.6,454.9 732.6,444.1 733.6,443.6 735.1,451.8 737.1,465.0 738.1,450.1 740.1,455.6 741.1,441.2 742.1,436.0 743.1,449.4 745.1,454.7 747.1,450.2 748.6,446.3 750.1,437.5 751.1,465.3 752.1,448.4 753.1,436.0 754.1,448.9 755.1,447.0 756.1,443.3 757.1,470.4 758.6,457.2 760.1,464.5 761.1,452.6 762.6,432.1 764.1,447.9 765.1,446.7 766.1,449.1 768.1,453.3 769.6,436.4 770.6,445.1 772.1,443.2 774.1,445.0 775.1,451.6 777.1,456.6 778.1,452.3 779.1,446.7 780.1,457.3 781.1,441.1 782.1,445.9 783.6,445.3 784.6,446.6 785.6,443.0 787.1,446.6 788.1,452.0 790.1,451.3 791.6,447.6 793.6,453.0 794.6,461.0 795.6,444.4 797.1,463.5 798.1,442.4 799.1,460.9 801.1,474.1 802.1,473.8 803.1,445.9 805.1,450.7 806.1,442.8 807.1,450.1 808.6,452.0 810.6,452.0 812.6,464.7 813.6,440.7 814.6,457.0 815.6,445.3 817.1,466.4 818.1,444.0 820.1,449.8 821.6,451.5 822.6,455.0 823.6,459.9 825.1,434.3 826.1,457.3 827.1,470.9 828.1,452.6 829.1,454.7 831.1,451.5 832.6,444.0 834.1,464.4 835.1,462.1 836.1,443.7 837.1,464.5 838.1,468.8 839.1,463.0 840.1,462.9 842.1,466.0 843.1,458.9 844.1,459.2 846.1,448.2 847.6,448.9 848.6,469.0 849.6,455.4 850.6,449.4 851.6,434.4 853.1,452.9 855.1,450.0 856.6,459.2 857.6,460.1 858.6,446.9 859.6,449.5 861.1,452.9 862.1,452.7 863.1,461.3 864.1,450.9 865.1,443.8 866.1,454.5 867.6,476.8 868.6,458.6 869.6,446.1 870.6,467.2 872.1,447.3 873.1,453.9 874.1,445.4 875.1,458.5 876.1,462.2 877.1,442.3 879.1,475.8 880.1,441.7 881.1,466.7 882.1,479.2 884.1,459.3 885.1,450.3 886.1,451.5 887.6,452.1 889.1,459.5 891.1,448.0 892.1,454.2 893.1,459.5 895.1,467.5 897.1,445.3 898.1,450.4 899.1,478.3 901.1,453.8 902.1,440.4 904.1,458.0 905.1,460.1 906.1,463.7 907.1,460.1 908.1,458.8 909.1,451.1 910.1,463.0 911.6,472.6 913.1,462.3 915.1,458.3 916.6,448.8 918.1,462.2 919.1,473.1 920.6,448.7 921.6,451.9 922.6,451.3 924.6,459.7 925.6,457.3 926.6,451.5 928.1,455.8 929.1,458.4 930.6,458.0 931.6,443.9 932.6,467.8 933.6,460.0 934.6,456.6 935.6,473.6 937.1,445.6 938.1,455.0 939.1,485.3 940.1,444.4 941.1,465.5 942.1,444.9 943.1,459.1 944.1,469.3 945.1,446.3 946.1,467.8 948.1,446.0 949.1,468.4 950.1,449.9 952.1,477.5 953.6,476.0 954.6,458.2 955.6,473.6 957.1,466.5 959.1,462.9 961.1,460.8 962.6,459.7 963.6,450.9 964.6,471.6 966.1,456.0 968.1,451.8 969.1,477.7 970.1,495.7 971.1,482.0 973.1,460.2 974.6,455.2 975.6,461.7 977.6,469.0 978.6,465.3 980.6,461.0 981.6,459.6 982.6,464.2 984.6,463.7 986.1,474.6 987.1,458.8 988.6,457.0 989.6,455.2 991.1,457.1 992.1,447.0 994.1,447.4 995.1,448.6 997.1,488.5 998.1,458.1 999.1,462.7 1001.1,464.1 1002.1,462.7 1003.1,459.5 1004.1,465.2 1005.1,447.4 1006.1,483.9 1007.1,445.5 1009.1,448.1 1010.6,439.5 1012.1,474.2 1013.6,490.8 1014.6,467.0 1016.1,475.7 1017.1,469.2 1018.1,456.7 1020.1,449.9 1021.6,465.4 1023.1,453.6 1024.1,442.7 1026.1,456.4 1028.1,463.0 1029.1,449.7 1030.1,457.1 1031.1,450.2 1033.1,460.4 1034.1,450.3 1035.6,450.5 1036.6,470.2 1038.1,465.1 1039.1,471.1 1040.1,462.8 1041.1,462.5 1042.6,461.1 1044.1,455.5 1045.6,456.8 1046.6,470.1 1047.6,451.7 1048.6,444.5 1050.1,456.3 1051.1,456.2 1052.6,472.5 1054.1,464.8 1055.6,453.9 1056.6,442.4 1057.6,455.8 1059.1,449.8 1060.6,466.1 1062.6,465.3 1063.6,461.3 1065.6,453.8 1067.1,470.7 1068.1,460.1 1069.1,464.0 1070.1,445.6 1071.6,463.8 1073.1,472.6 1074.1,461.7 1075.1,466.6 1077.1,458.6 1078.1,458.4 1080.1,457.4 1082.1,463.7 1083.6,472.7 1084.6,478.5 1086.1,467.7 1088.1,464.3 1089.1,460.9 1090.1,479.6 1092.1,459.2 1094.1,485.1 1095.1,461.8 1097.1,478.7 1098.1,452.2 1099.1,449.6 1100.1,461.8 1102.1,468.3 1103.1,460.3 1104.1,462.2 1106.1,477.1 1107.1,472.3 1108.6,459.0 1110.1,471.3 1112.1,482.9 1113.1,455.4 1114.1,464.1 1115.6,446.2 1116.6,456.6 1118.1,478.0 1119.1,479.7 1121.1,459.6 1122.1,456.3 1123.6,482.1 1124.6,472.7 1125.6,447.2 1126.6,464.4 1127.6,463.4 1128.6,482.2 1130.1,458.3 1131.1,471.2 1132.1,463.0 1133.1,453.0 1134.1,449.5 1135.6,460.6 1136.6,464.9 1137.6,451.6 1139.1,481.2 1140.6,469.5 1142.1,444.8 1143.1,454.2 1144.1,456.7 1145.6,503.0 1146.6,455.2 1147.6,457.2 1148.6,482.2 1149.6,479.2 1151.1,469.8 1152.1,463.9 1154.1,446.4 1155.6,470.7 1157.6,469.2 1158.6,450.8 1160.6,460.1 1162.6,474.2 1164.1,467.7 1165.1,450.3 1166.1,452.6 1168.1,467.9 1169.1,462.9 1170.1,458.2 1172.1,448.5 1174.1,452.8 1175.1,464.5 1176.6,503.2 1178.1,496.6 1179.1,450.2 1180.1,462.0 1181.6,481.8 1183.6,455.1 1184.6,454.5 1185.6,463.3 1186.6,452.0 1187.6,466.0 1188.6,466.8 1190.1,469.7 1191.6,478.9 1192.6,447.3 1194.1,458.8 1195.1,464.9 1197.1,470.2 1198.6,446.5 1199.6,470.8 1201.6,459.1 1203.1,480.6 1204.6,460.2 1205.6,456.6 1206.6,463.6 1207.6,467.1 1208.6,450.7 1210.1,470.7 1212.1,457.9 1213.1,463.7 1214.1,467.5 1216.1,454.1 1217.1,465.5 1218.1,465.2 1219.6,464.8 1220.6,461.1 1221.6,453.4 1222.6,450.9 1224.6,464.7 1226.1,475.5 1227.6,460.9 1228.6,460.1 1229.6,460.8 1231.1,467.7 1232.6,453.8 1234.6,472.4 1235.6,473.4 1236.6,454.8 1238.1,482.0 1239.1,484.1 1241.1,465.5 1242.6,456.3 1243.6,473.4 1244.6,481.2 1245.6,454.3 1246.6,474.7 1247.6,467.4 1248.6,457.5 1250.1,457.5 1251.1,451.7 1252.1,463.9 1253.1,472.7 1254.1,458.5 1255.1,456.4 1256.1,453.4 1257.1,469.1 1259.1,466.4 1261.1,469.8 1262.1,453.2 1263.6,467.0 1264.6,441.8 1266.1,472.5 1267.1,466.5 1268.1,455.3 1270.1,443.2 1271.1,452.7 1272.1,455.1 1273.1,465.4 1274.1,464.6 1275.1,451.0 1276.1,478.5 1277.1,469.9 1278.1,461.3 1279.6,456.3 1280.6,458.6 1281.6,461.5 1282.6,468.2 1283.6,459.9 1285.1,478.7 1286.1,451.7 1287.1,451.1 1288.1,466.7 1289.1,479.4 1290.6,461.3 1292.6,477.1 1294.1,477.5 1295.1,462.3 1296.6,480.7 1298.1,469.3 1299.1,470.1 1301.1,475.6 1302.1,475.8 1303.6,462.1 1305.1,458.4 1306.1,456.7 1307.1,460.2 1308.6,455.9 1309.6,451.2 1310.6,470.5 1312.6,473.5 1313.6,461.2 1314.6,449.1 1316.1,465.1 1317.1,473.7 1318.1,464.5 1319.1,450.5 1320.1,465.6 1321.1,450.3 1322.1,443.2 1324.1,482.7 1325.1,452.5 1327.1,461.9 1328.1,452.9 1329.1,463.6 1330.6,495.3 1332.6,460.2 1334.1,458.8 1335.6,469.3 1336.6,471.0 1338.6,468.5 1339.6,482.1 1340.6,455.0 1342.6,477.3 1343.6,457.7 1344.6,459.0 1346.1,455.9 1347.6,461.9 1348.6,474.6 1350.1,475.0 1351.1,455.3 1353.1,470.7 1354.6,468.3 1356.1,460.0 1357.1,455.5 1358.1,476.8 1359.1,466.0 1360.1,465.6 1361.1,469.2 1362.1,462.7 1363.1,462.7 1364.1,468.4 1365.1,461.5 1366.1,466.1 1367.1,482.3 1368.6,468.4 1370.6,479.7 1371.6,455.5 1372.6,453.5 1373.6,468.6 1374.6,470.2 1375.6,458.5 1376.6,472.1 1377.6,477.6 1378.6,454.8 1379.6,466.5 1381.6,459.3 1383.1,455.0 1384.1,481.5 1385.6,480.1 1386.6,480.0 1388.1,464.6 1389.1,477.6 1391.1,458.4 1392.1,475.1 1393.1,468.2 1394.1,460.9 1395.6,470.1 1397.1,464.3 1398.1,459.4 1399.1,458.6 1400.1,478.5 1401.6,454.6 1402.6,461.7 1403.6,454.1 1404.6,464.5 1405.6,455.0 1407.6,479.3 1408.6,468.3 1410.6,459.0 1412.1,491.0 1413.1,457.3 1414.1,497.4 1415.1,461.4 1416.1,456.8 1417.6,489.5 1418.6,470.6 1420.6,476.3 1421.6,461.0 1422.6,451.0 1423.6,453.1 1425.6,462.0 1427.1,461.5 1429.1,460.4 1430.1,460.0 1431.1,457.9 1432.6,462.8 1434.1,469.0 1435.1,469.7 1437.1,455.6 1438.6,460.1 1439.6,478.0 1440.6,466.0 1441.6,497.7 1443.6,467.0 1444.6,456.0 1445.6,456.0 1447.6,465.9 1448.6,464.8 1450.6,457.1 1451.6,466.4 1452.6,478.1 1453.6,465.9 1455.1,473.7 1456.1,484.5 1457.1,462.4 1459.1,460.0 1460.1,480.4 1461.6,475.9 1462.6,468.5 1463.6,454.5 1464.6,465.2 1465.6,481.0 1466.6,459.3 1467.6,447.7 1468.6,457.7 1470.6,486.2 1472.6,484.9 1473.6,442.9 1475.6,462.8 1476.6,459.6 1478.1,456.2 1479.6,467.3 1480.6,450.3 1481.6,495.6 1482.6,465.1 1483.6,466.9 1484.6,476.0 1485.6,464.9 1487.1,471.2 1488.1,467.3 1489.1,482.6 1490.1,456.6 1491.6,468.5 1492.6,480.6 1493.6,469.0 1494.6,468.2 1495.6,463.3 1497.1,480.7 1498.6,465.1 1500.6,465.0 1501.6,483.9 1502.6,474.9 1503.6,470.2 1505.6,467.3 1507.6,470.4 1509.6,458.8 1511.6,471.0 1512.6,460.5 1513.6,455.6 1515.1,469.9 1516.1,455.6 1518.1,483.2 1519.1,463.8 1520.1,456.4 1521.1,465.0 1523.1,467.4 1524.1,473.1 1525.6,479.7 1526.6,455.5 1528.6,473.3 1529.6,469.2 1531.6,494.7 1532.6,458.9 1533.6,462.6 1534.6,446.7 1535.6,456.9 1536.6,475.9 1538.1,460.2 1539.1,462.6 1540.1,466.2 1541.1,468.0 1542.1,449.8 1543.1,476.1 1544.6,476.5 1545.6,494.1 1546.6,454.0 1547.6,468.2 1549.1,467.7 1550.1,459.9 1551.6,471.5 1553.1,465.0 1554.1,470.0 1555.6,448.1 1556.6,476.5 1557.6,460.8 1558.6,462.1 1560.6,457.8 1561.6,454.7 1563.1,463.5 1565.1,465.0 1567.1,447.4 1568.6,470.2 1570.6,470.5 1571.6,472.1 1572.6,457.2 1573.6,469.9 1574.6,454.8 1576.6,462.1 1577.6,477.7 1578.6,468.9 1580.6,467.3 1582.6,475.1 1584.1,469.1 1585.1,477.9 1587.1,453.7 1589.1,470.9 1590.1,470.3 1591.6,462.6 1592.6,491.0 1593.6,467.1 1594.6,480.1 1595.6,470.6 1596.6,468.3 1597.6,462.2 1599.6,476.5 1600.6,457.6 1601.6,451.0 1602.6,464.4 1604.6,459.7 1606.6,468.2 1608.1,490.7 1609.1,472.1 1610.6,460.2 1611.6,464.5 1612.6,491.0 1613.6,460.6 1614.6,460.1 1615.6,472.5 1616.6,496.2 1617.6,463.7 1618.6,461.1 1620.1,450.9 1621.6,450.7 1622.6,478.3 1623.6,460.0 1624.6,468.8 1626.6,461.1 1628.1,472.5 1629.6,450.3 1630.6,450.3 1631.6,457.0 1632.6,454.4 1633.6,467.1 1634.6,473.2 1635.6,464.0 1636.6,461.3 1638.1,481.0 1639.1,466.0 1640.1,470.3 1641.1,455.1 1642.1,463.0 1643.1,480.3 1644.1,471.5 1645.1,475.9 1646.1,472.5 1647.6,470.6 1648.6,467.8 1649.6,476.9 1651.6,459.4 1652.6,464.1 1654.6,452.9 1655.6,447.9 1657.6,447.9 1659.1,462.1 1661.1,468.2 1662.1,474.0 1663.6,487.6 1664.6,460.9 1665.6,459.2 1666.6,463.4 1667.6,451.4 1668.6,464.2 1670.1,462.8 1671.6,455.9 1673.1,470.8 1675.1,462.8 1676.1,457.5 1677.1,441.1 1678.1,472.8 1680.1,477.9 1681.1,467.1 1682.1,466.8 1683.1,470.8 1685.1,450.2 1686.1,459.6 1687.6,489.8 1689.6,448.2 1690.6,449.5 1691.6,466.0 1692.6,464.5 1694.6,476.7 1695.6,468.2 1696.6,459.1 1697.6,478.1 1699.6,453.1 1700.6,466.7 1701.6,470.4 1702.6,453.9 1703.6,445.5 1704.6,459.8 1705.6,462.5 1707.1,474.1 1708.1,472.2 1710.1,470.5 1712.1,477.3 1713.1,464.5 1715.1,467.6 1716.1,474.8 1717.1,466.2 1718.1,449.9 1719.6,462.1 1721.6,477.3 1722.6,494.1 1724.6,476.3 1725.6,474.9 1727.6,477.4 1729.6,470.1 1730.6,463.9 1731.6,457.1 1733.6,480.3 1735.6,466.5 1736.6,480.5 1737.6,460.9 1738.6,467.6 1739.6,461.2 1740.6,464.7 1741.6,471.7 1742.6,474.8 1744.6,464.8 1745.6,479.0 1747.1,452.8 1748.1,456.9 1749.6,461.5 1750.6,468.0 1750.5,497" fill="none" stroke="#d8c83a" stroke-width="1" shape-rendering="crispEdges"/>
<polygon points="3,572 4,573 5,573 6,573 7,573 8,572 9,573 10,573 11,572 12,573 13,573 14,573 15,573 16,572 17,573 18,572 19,572 20,573 21,573 22,573 23,573 24,573 25,572 26,572 27,572 28,573 29,572 30,571 31,573 32,573 33,573 34,573 35,572 36,573 37,573 38,571 39,571 40,572 41,573 42,571 43,573 44,573 45,573 46,573 47,573 48,573 49,573 50,573 51,572 52,573 53,572 54,572 55,572 56,573 57,573 58,573 59,573 60,572 61,573 62,573 63,572 64,573 65,573 66,572 67,572 68,573 69,572 70,573 71,572 72,573 73,572 74,573 75,573 76,573 77,572 78,573 79,572 80,572 81,573 82,572 83,572 84,573 85,573 86,573 87,573 88,573 89,572 90,572 91,572 92,573 93,572 94,573 95,572 96,572 97,572 98,572 99,573 100,572 101,573 102,573 103,573 104,573 105,571 106,571 107,573 108,573 109,573 110,572 111,573 112,572 113,573 114,572 115,573 116,572 117,573 118,573 119,573 120,572 121,573 122,573 123,573 124,573 125,573 126,573 127,573 128,573 129,573 130,572 131,573 132,572 133,573 134,573 135,572 136,570 137,573 138,573 139,573 140,573 141,573 142,573 143,572 144,573 145,572 146,573 147,573 148,573 149,573 150,573 151,573 152,573 153,572 154,572 155,572 156,573 157,572 158,573 159,573 160,573 161,573 162,573 163,573 164,571 165,571 166,573 167,572 168,573 169,573 170,573 171,573 172,573 173,573 174,572 175,573 176,573 177,572 178,573 179,572 180,573 181,572 182,572 183,573 184,572 185,573 186,573 187,573 188,572 189,573 190,572 191,573 192,572 193,572 194,572 195,573 196,571 197,573 198,573 199,573 200,573 201,572 202,573 203,573 204,573 205,572 206,573 207,573 208,572 209,573 210,573 211,573 212,572 213,572 214,573 215,573 216,572 217,572 218,572 219,572 220,572 221,572 222,573 223,573 224,572 225,572 226,573 227,572 228,572 229,573 230,573 231,573 232,573 233,573 234,573 235,572 236,573 237,573 238,572 239,573 240,571 241,572 242,572 243,572 244,571 245,572 246,573 247,573 248,573 249,572 250,572 251,573 252,573 253,572 254,573 255,573 256,573 257,573 258,573 259,572 260,573 261,573 262,573 263,573 264,572 265,573 266,572 267,573 268,572 269,573 270,571 271,573 272,573 273,571 274,573 275,571 276,572 277,573 278,573 279,573 280,572 281,573 282,573 283,573 284,573 285,572 286,573 287,573 288,573 289,573 290,573 291,573 292,572 293,573 294,573 295,573 296,573 297,573 298,573 299,572 300,573 301,571 302,573 303,572 304,573 305,573 306,573 307,572 308,573 309,572 310,571 311,573 312,572 313,572 314,573 315,572 316,573 317,573 318,573 319,573 320,572 321,572 322,573 323,573 324,573 325,573 326,573 327,573 328,572 329,573 330,573 331,573 332,572 333,573 334,572 335,573 336,572 337,573 338,573 339,573 340,573 341,573 342,573 343,573 344,571 345,572 346,573 347,573 348,573 349,572 350,573 351,573 352,572 353,572 354,573 355,573 356,573 357,572 358,573 359,573 360,571 361,572 362,573 363,573 364,572 365,573 366,573 367,573 368,573 369,571 370,572 371,572 372,572 373,573 374,573 375,573 376,573 377,572 378,572 379,572 380,571 381,573 382,573 383,573 384,572 385,573 386,571 387,573 388,573 389,572 390,571 391,573 392,573 393,573 394,572 395,573 396,572 397,571 398,571 399,573 400,572 401,572 402,573 403,573 404,573 405,573 406,573 407,573 408,573 409,573 410,572 411,573 412,572 413,571 414,573 415,573 416,573 417,573 418,573 419,573 420,572 421,572 422,573 423,573 424,572 425,572 426,573 427,573 428,571 429,572 430,573 431,573 432,573 433,572 434,573 435,572 436,573 437,573 438,573 439,572 440,572 441,573 442,572 443,573 444,572 445,573 446,572 447,573 448,573 449,572 450,572 451,573 452,573 453,571 454,571 455,572 456,573 457,573 458,573 459,573 460,573 461,572 462,573 463,573 464,572 465,573 466,572 467,572 468,573 469,573 470,573 471,572 472,572 473,573 474,571 475,573 476,573 477,572 478,572 479,573 480,573 481,572 482,573 483,571 484,573 485,572 486,572 487,572 488,573 489,573 490,573 491,572 492,573 493,573 494,572 495,573 496,573 497,573 498,572 499,572 500,571 501,573 502,573 503,572 504,573 505,573 506,573 507,573 508,573 509,573 510,572 511,573 512,573 513,571 514,573 515,573 516,573 517,572 518,571 519,573 520,573 521,571 522,571 523,573 524,572 525,573 526,572 527,573 528,572 529,573 530,573 531,572 532,573 533,573 534,573 535,572 536,573 537,572 538,573 539,573 540,573 541,573 542,573 543,570 544,573 545,572 546,572 547,573 548,573 549,573 550,573 551,573 552,573 553,572 554,572 555,573 556,570 557,572 558,573 559,573 560,573 561,573 562,573 563,572 564,573 565,573 566,572 567,572 568,573 569,572 570,572 571,573 572,573 573,573 574,572 575,572 576,573 577,573 578,573 579,573 580,572 581,573 582,573 583,572 584,572 585,573 586,573 587,573 588,572 589,572 590,573 591,572 592,573 593,573 594,571 595,572 596,573 597,573 598,573 599,572 600,571 601,573 602,573 603,573 604,573 605,572 606,572 607,572 608,573 609,573 610,571 611,573 612,573 613,573 614,573 615,573 616,573 617,572 618,573 619,572 620,572 621,572 622,573 623,571 624,572 625,572 626,571 627,573 628,572 629,573 630,573 631,573 632,572 633,573 634,572 635,572 636,573 637,572 638,572 639,573 640,571 641,572 642,572 643,573 644,571 645,573 646,573 647,573 648,572 649,573 650,573 651,572 652,572 653,570 654,573 655,573 656,573 657,571 658,572 659,573 660,572 661,572 662,573 663,571 664,573 665,572 666,573 667,572 668,572 669,572 670,572 671,573 672,572 673,573 674,573 675,572 676,573 677,571 678,573 679,573 680,572 681,572 682,573 683,573 684,572 685,573 686,573 687,573 688,573 689,572 690,572 691,573 692,573 693,573 694,573 695,573 696,573 697,573 698,572 699,572 700,573 701,573 702,572 703,573 704,573 705,573 706,573 707,573 708,573 709,572 710,573 711,573 712,573 713,573 714,573 715,573 716,572 717,573 718,572 719,573 720,572 721,573 722,573 723,573 724,572 725,573 726,573 727,573 728,573 729,573 730,571 731,572 732,573 733,573 734,572 735,573 736,573 737,573 738,572 739,573 740,573 741,573 742,572 743,572 744,573 745,573 746,573 747,573 748,573 749,573 750,572 751,572 752,571 753,573 754,573 755,572 756,572 757,572 758,572 759,573 760,571 761,572 762,572 763,572 764,572 765,572 766,573 767,572 768,572 769,573 770,572 771,573 772,572 773,573 774,573 775,572 776,573 777,573 778,573 779,571 780,573 781,573 782,573 783,573 784,573 785,573 786,573 787,573 788,573 789,572 790,571 791,573 792,573 793,571 794,572 795,573 796,573 797,573 798,573 799,573 800,573 801,572 802,573 803,573 804,572 805,572 806,573 807,573 808,572 809,573 810,573 811,572 812,573 813,573 814,573 815,573 816,572 817,573 818,572 819,572 820,573 821,573 822,573 823,571 824,573 825,573 826,572 827,573 828,572 829,572 830,573 831,573 832,573 833,572 834,572 835,573 836,573 837,572 838,573 839,573 840,573 841,573 842,573 843,572 844,573 845,571 846,572 847,572 848,572 849,571 850,573 851,573 852,573 853,573 854,573 855,573 856,573 857,573 858,573 859,573 860,571 861,573 862,571 863,573 864,572 865,572 866,572 867,573 868,573 869,572 870,573 871,573 872,573 873,573 874,573 875,573 876,571 877,572 878,573 879,572 880,573 881,573 882,572 883,571 884,573 885,572 886,572 887,572 888,572 889,573 890,573 891,573 892,573 893,573 894,573 895,571 896,572 897,573 898,573 899,573 900,573 901,571 902,572 903,573 904,572 905,573 906,572 907,573 908,573 909,573 910,573 911,573 912,573 913,572 914,572 915,572 916,573 917,573 918,573 919,572 920,573 921,573 922,573 923,573 924,573 925,573 926,573 927,573 928,573 929,573 930,573 931,573 932,573 933,572 934,573 935,573 936,572 937,572 938,573 939,573 940,573 941,572 942,571 943,572 944,573 945,573 946,573 947,573 948,572 949,573 950,573 951,573 952,573 953,573 954,573 955,573 956,573 957,572 958,573 959,573 960,573 961,571 962,573 963,573 964,573 965,573 966,573 967,572 968,572 969,573 970,573 971,572 972,573 973,573 974,572 975,572 976,572 977,572 978,572 979,573 980,573 981,573 982,573 983,573 984,572 985,573 986,571 987,573 988,573 989,573 990,572 991,572 992,573 993,571 994,572 995,573 996,573 997,572 998,573 999,573 1000,573 1001,573 1002,573 1003,573 1004,573 1005,571 1006,573 1007,573 1008,572 1009,573 1010,573 1011,573 1012,573 1013,573 1014,572 1015,573 1016,573 1017,572 1018,572 1019,572 1020,572 1021,572 1022,571 1023,572 1024,572 1025,573 1026,573 1027,572 1028,573 1029,573 1030,573 1031,573 1032,573 1033,572 1034,573 1035,572 1036,572 1037,573 1038,573 1039,573 1040,573 1041,573 1042,573 1043,573 1044,573 1045,573 1046,571 1047,573 1048,573 1049,572 1050,573 1051,573 1052,573 1053,573 1054,573 1055,573 1056,573 1057,571 1058,572 1059,573 1060,572 1061,573 1062,572 1063,573 1064,572 1065,572 1066,572 1067,572 1068,572 1069,572 1070,573 1071,573 1072,572 1073,571 1074,573 1075,573 1076,573 1077,573 1078,572 1079,572 1080,573 1081,573 1082,573 1083,573 1084,573 1085,572 1086,573 1087,573 1088,573 1089,573 1090,572 1091,571 1092,572 1093,572 1094,573 1095,573 1096,571 1097,573 1098,573 1099,572 1100,573 1101,572 1102,572 1103,573 1104,573 1105,573 1106,573 1107,573 1108,573 1109,573 1110,572 1111,573 1112,573 1113,573 1114,572 1115,571 1116,572 1117,571 1118,573 1119,572 1120,573 1121,572 1122,573 1123,573 1124,573 1125,573 1126,572 1127,572 1128,572 1129,572 1130,571 1131,573 1132,573 1133,573 1134,573 1135,573 1136,573 1137,571 1138,573 1139,573 1140,573 1141,572 1142,572 1143,573 1144,573 1145,572 1146,573 1147,572 1148,573 1149,573 1150,573 1151,573 1152,572 1153,571 1154,573 1155,572 1156,573 1157,573 1158,573 1159,572 1160,573 1161,572 1162,572 1163,572 1164,573 1165,572 1166,573 1167,573 1168,573 1169,572 1170,572 1171,572 1172,573 1173,571 1174,573 1175,573 1176,573 1177,572 1178,573 1179,572 1180,572 1181,573 1182,572 1183,573 1184,573 1185,573 1186,570 1187,572 1188,573 1189,573 1190,573 1191,573 1192,573 1193,573 1194,573 1195,573 1196,572 1197,573 1198,573 1199,573 1200,572 1201,573 1202,573 1203,571 1204,572 1205,573 1206,572 1207,573 1208,571 1209,573 1210,572 1211,572 1212,573 1213,572 1214,573 1215,573 1216,573 1217,572 1218,573 1219,572 1220,573 1221,573 1222,573 1223,573 1224,573 1225,573 1226,572 1227,573 1228,572 1229,572 1230,573 1231,573 1232,573 1233,573 1234,573 1235,573 1236,573 1237,573 1238,572 1239,573 1240,572 1241,573 1242,573 1243,573 1244,569 1245,572 1246,573 1247,573 1248,572 1249,572 1250,571 1251,573 1252,573 1253,572 1254,573 1255,571 1256,573 1257,572 1258,571 1259,573 1260,572 1261,573 1262,573 1263,573 1264,572 1265,573 1266,571 1267,573 1268,573 1269,573 1270,573 1271,572 1272,573 1273,573 1274,573 1275,572 1276,572 1277,573 1278,573 1279,573 1280,573 1281,573 1282,573 1283,573 1284,573 1285,573 1286,573 1287,573 1288,572 1289,572 1290,572 1291,573 1292,573 1293,572 1294,572 1295,573 1296,573 1297,572 1298,572 1299,573 1300,573 1301,572 1302,572 1303,573 1304,571 1305,573 1306,572 1307,572 1308,573 1309,573 1310,572 1311,573 1312,573 1313,572 1314,573 1315,573 1316,573 1317,573 1318,573 1319,573 1320,571 1321,573 1322,572 1323,572 1324,573 1325,573 1326,573 1327,573 1328,573 1329,573 1330,573 1331,573 1332,573 1333,572 1334,572 1335,572 1336,571 1337,573 1338,573 1339,573 1340,573 1341,572 1342,573 1343,573 1344,573 1345,572 1346,573 1347,572 1348,573 1349,573 1350,573 1351,572 1352,572 1353,571 1354,573 1355,573 1356,573 1357,573 1358,572 1359,573 1360,571 1361,572 1362,572 1363,571 1364,573 1365,572 1366,573 1367,573 1368,572 1369,573 1370,573 1371,573 1372,573 1373,571 1374,573 1375,572 1376,573 1377,572 1378,573 1379,573 1380,573 1381,572 1382,572 1383,571 1384,573 1385,573 1386,573 1387,572 1388,573 1389,573 1390,573 1391,573 1392,573 1393,573 1394,573 1395,573 1396,573 1397,573 1398,573 1399,572 1400,573 1401,573 1402,573 1403,572 1404,572 1405,572 1406,572 1407,573 1408,573 1409,573 1410,572 1411,573 1412,572 1413,573 1414,572 1415,572 1416,573 1417,573 1418,572 1419,572 1420,572 1421,573 1422,572 1423,572 1424,572 1425,573 1426,573 1427,573 1428,573 1429,573 1430,572 1431,572 1432,572 1433,573 1434,573 1435,573 1436,573 1437,572 1438,573 1439,572 1440,572 1441,573 1442,573 1443,573 1444,573 1445,573 1446,572 1447,573 1448,573 1449,571 1450,573 1451,572 1452,573 1453,571 1454,573 1455,572 1456,572 1457,573 1458,573 1459,572 1460,573 1461,573 1462,572 1463,573 1464,573 1465,571 1466,572 1467,572 1468,572 1469,573 1470,572 1471,572 1472,573 1473,572 1474,572 1475,572 1476,572 1477,572 1478,572 1479,573 1480,573 1481,572 1482,573 1483,572 1484,572 1485,573 1486,573 1487,573 1488,572 1489,573 1490,573 1491,572 1492,572 1493,573 1494,572 1495,573 1496,571 1497,573 1498,573 1499,573 1500,573 1501,572 1502,573 1503,573 1504,572 1505,573 1506,573 1507,573 1508,572 1509,573 1510,571 1511,573 1512,572 1513,572 1514,572 1515,573 1516,573 1517,573 1518,571 1519,573 1520,572 1521,572 1522,573 1523,573 1524,573 1525,573 1526,572 1527,572 1528,572 1529,573 1530,573 1531,573 1532,573 1533,572 1534,573 1535,572 1536,573 1537,572 1538,572 1539,573 1540,572 1541,572 1542,573 1543,573 1544,571 1545,572 1546,573 1547,573 1548,573 1549,573 1550,572 1551,573 1552,573 1553,572 1554,573 1555,571 1556,572 1557,573 1558,573 1559,573 1560,573 1561,571 1562,573 1563,573 1564,573 1565,573 1566,573 1567,573 1568,573 1569,573 1570,572 1571,572 1572,572 1573,573 1574,573 1575,572 1576,573 1577,572 1578,573 1579,572 1580,573 1581,573 1582,571 1583,573 1584,573 1585,573 1586,572 1587,572 1588,573 1589,573 1590,573 1591,573 1592,572 1593,573 1594,573 1595,573 1596,571 1597,572 1598,572 1599,573 1600,572 1601,573 1602,573 1603,572 1604,572 1605,573 1606,573 1607,572 1608,572 1609,573 1610,573 1611,572 1612,573 1613,572 1614,572 1615,572 1616,572 1617,572 1618,572 1619,573 1620,572 1621,572 1622,573 1623,572 1624,573 1625,573 1626,573 1627,573 1628,572 1629,573 1630,573 1631,573 1632,573 1633,572 1634,573 1635,573 1636,572 1637,572 1638,573 1639,570 1640,573 1641,573 1642,573 1643,572 1644,571 1645,572 1646,572 1647,573 1648,573 1649,573 1650,573 1651,573 1652,573 1653,571 1654,573 1655,572 1656,573 1657,572 1658,573 1659,573 1660,573 1661,573 1662,572 1663,573 1664,572 1665,573 1666,573 1667,573 1668,573 1669,573 1670,573 1671,573 1672,573 1673,573 1674,573 1675,573 1676,572 1677,573 1678,572 1679,573 1680,572 1681,572 1682,572 1683,573 1684,573 1685,573 1686,572 1687,573 1688,573 1689,573 1690,573 1691,573 1692,572 1693,573 1694,572 1695,572 1696,573 1697,572 1698,573 1699,573 1700,573 1701,572 1702,573 1703,572 1704,573 1705,572 1706,573 1707,572 1708,571 1709,573 1710,573 1711,573 1712,573 1713,573 1714,573 1715,573 1716,572 1717,573 1718,573 1719,573 1720,571 1721,573 1722,572 1723,571 1724,573 1725,573 1726,573 1727,573 1728,573 1729,573 1730,573 1731,573 1732,572 1733,572 1734,572 1735,572 1736,572 1737,573 1738,572 1739,573 1740,573 1741,573 1742,573 1743,573 1744,573 1745,573 1746,573 1747,573 1748,573 1749,573 1750,571 1751,573 1751,732 1750,732 1749,732 1748,733 1747,732 1746,732 1745,732 1744,732 1743,732 1742,733 1741,732 1740,732 1739,732 1738,732 1737,732 1736,733 1735,734 1734,732 1733,732 1732,732 1731,732 1730,733 1729,732 1728,732 1727,732 1726,732 1725,732 1724,732 1723,733 1722,732 1721,733 1720,733 1719,732 1718,732 1717,732 1716,732 1715,732 1714,732 1713,732 1712,733 1711,733 1710,732 1709,732 1708,732 1707,732 1706,732 1705,732 1704,733 1703,733 1702,733 1701,732 1700,732 1699,732 1698,732 1697,732 1696,732 1695,732 1694,732 1693,732 1692,732 1691,733 1690,733 1689,732 1688,732 1687,732 1686,734 1685,732 1684,733 1683,732 1682,735 1681,732 1680,732 1679,732 1678,732 1677,734 1676,734 1675,733 1674,732 1673,733 1672,732 1671,733 1670,733 1669,734 1668,732 1667,733 1666,733 1665,733 1664,733 1663,732 1662,733 1661,733 1660,732 1659,732 1658,732 1657,732 1656,732 1655,733 1654,733 1653,733 1652,734 1651,733 1650,732 1649,733 1648,733 1647,732 1646,733 1645,733 1644,732 1643,732 1642,732 1641,733 1640,732 1639,733 1638,732 1637,733 1636,732 1635,732 1634,735 1633,732 1632,732 1631,734 1630,732 1629,733 1628,732 1627,732 1626,736 1625,732 1624,733 1623,732 1622,732 1621,733 1620,732 1619,732 1618,732 1617,732 1616,732 1615,732 1614,732 1613,733 1612,733 1611,733 1610,733 1609,732 1608,732 1607,733 1606,733 1605,732 1604,733 1603,732 1602,732 1601,732 1600,732 1599,732 1598,732 1597,732 1596,732 1595,733 1594,733 1593,732 1592,733 1591,732 1590,732 1589,733 1588,732 1587,732 1586,734 1585,732 1584,732 1583,733 1582,732 1581,734 1580,734 1579,732 1578,732 1577,732 1576,732 1575,733 1574,733 1573,732 1572,732 1571,732 1570,732 1569,732 1568,732 1567,732 1566,732 1565,733 1564,732 1563,733 1562,733 1561,733 1560,732 1559,732 1558,732 1557,733 1556,733 1555,732 1554,733 1553,733 1552,732 1551,732 1550,732 1549,732 1548,732 1547,732 1546,732 1545,733 1544,732 1543,733 1542,733 1541,733 1540,732 1539,732 1538,732 1537,732 1536,732 1535,732 1534,733 1533,733 1532,732 1531,733 1530,732 1529,732 1528,732 1527,732 1526,733 1525,733 1524,732 1523,732 1522,732 1521,732 1520,733 1519,732 1518,733 1517,732 1516,733 1515,733 1514,733 1513,733 1512,734 1511,732 1510,734 1509,733 1508,732 1507,732 1506,732 1505,733 1504,733 1503,732 1502,732 1501,732 1500,732 1499,734 1498,732 1497,732 1496,733 1495,732 1494,733 1493,733 1492,732 1491,733 1490,734 1489,732 1488,732 1487,732 1486,732 1485,733 1484,732 1483,733 1482,732 1481,732 1480,732 1479,732 1478,734 1477,733 1476,732 1475,733 1474,732 1473,732 1472,733 1471,732 1470,733 1469,733 1468,732 1467,732 1466,733 1465,732 1464,732 1463,732 1462,732 1461,733 1460,733 1459,732 1458,732 1457,732 1456,732 1455,732 1454,732 1453,732 1452,733 1451,732 1450,732 1449,733 1448,732 1447,732 1446,733 1445,732 1444,733 1443,733 1442,732 1441,733 1440,732 1439,732 1438,732 1437,732 1436,733 1435,732 1434,732 1433,732 1432,732 1431,732 1430,732 1429,732 1428,732 1427,732 1426,732 1425,732 1424,732 1423,733 1422,732 1421,733 1420,734 1419,733 1418,733 1417,734 1416,732 1415,733 1414,734 1413,733 1412,732 1411,732 1410,732 1409,732 1408,732 1407,732 1406,732 1405,733 1404,732 1403,732 1402,732 1401,733 1400,733 1399,732 1398,732 1397,732 1396,733 1395,733 1394,732 1393,732 1392,732 1391,732 1390,732 1389,732 1388,733 1387,734 1386,733 1385,732 1384,733 1383,734 1382,732 1381,732 1380,732 1379,732 1378,732 1377,732 1376,733 1375,732 1374,733 1373,732 1372,732 1371,732 1370,732 1369,732 1368,732 1367,732 1366,732 1365,732 1364,733 1363,733 1362,733 1361,732 1360,732 1359,732 1358,734 1357,734 1356,733 1355,732 1354,732 1353,732 1352,732 1351,732 1350,733 1349,733 1348,732 1347,732 1346,732 1345,732 1344,733 1343,732 1342,733 1341,732 1340,732 1339,733 1338,732 1337,733 1336,732 1335,732 1334,732 1333,732 1332,732 1331,732 1330,732 1329,732 1328,732 1327,732 1326,733 1325,733 1324,732 1323,734 1322,732 1321,733 1320,732 1319,732 1318,732 1317,732 1316,732 1315,733 1314,733 1313,733 1312,732 1311,733 1310,733 1309,732 1308,733 1307,732 1306,732 1305,732 1304,732 1303,732 1302,732 1301,732 1300,733 1299,733 1298,732 1297,732 1296,733 1295,732 1294,732 1293,732 1292,732 1291,732 1290,732 1289,733 1288,732 1287,732 1286,733 1285,733 1284,732 1283,733 1282,733 1281,734 1280,733 1279,732 1278,732 1277,732 1276,732 1275,732 1274,732 1273,732 1272,734 1271,733 1270,732 1269,732 1268,732 1267,732 1266,732 1265,733 1264,732 1263,734 1262,732 1261,733 1260,733 1259,732 1258,732 1257,734 1256,732 1255,734 1254,734 1253,733 1252,732 1251,733 1250,733 1249,732 1248,732 1247,733 1246,732 1245,732 1244,734 1243,732 1242,732 1241,732 1240,732 1239,733 1238,732 1237,732 1236,733 1235,733 1234,733 1233,734 1232,732 1231,734 1230,732 1229,732 1228,732 1227,732 1226,732 1225,732 1224,733 1223,732 1222,732 1221,732 1220,733 1219,732 1218,734 1217,732 1216,732 1215,732 1214,732 1213,734 1212,733 1211,732 1210,732 1209,732 1208,732 1207,733 1206,733 1205,733 1204,732 1203,733 1202,733 1201,732 1200,732 1199,732 1198,733 1197,732 1196,733 1195,732 1194,732 1193,733 1192,733 1191,732 1190,732 1189,732 1188,732 1187,733 1186,733 1185,732 1184,732 1183,732 1182,732 1181,732 1180,732 1179,733 1178,732 1177,733 1176,733 1175,733 1174,732 1173,732 1172,733 1171,733 1170,732 1169,732 1168,732 1167,732 1166,732 1165,732 1164,734 1163,732 1162,733 1161,732 1160,732 1159,734 1158,732 1157,733 1156,732 1155,732 1154,733 1153,732 1152,733 1151,732 1150,733 1149,732 1148,732 1147,732 1146,734 1145,732 1144,732 1143,734 1142,732 1141,732 1140,732 1139,732 1138,733 1137,732 1136,732 1135,732 1134,732 1133,733 1132,734 1131,733 1130,732 1129,732 1128,732 1127,733 1126,732 1125,733 1124,733 1123,734 1122,733 1121,732 1120,733 1119,732 1118,732 1117,732 1116,732 1115,732 1114,732 1113,733 1112,732 1111,732 1110,732 1109,732 1108,732 1107,733 1106,733 1105,732 1104,732 1103,732 1102,732 1101,733 1100,732 1099,733 1098,732 1097,732 1096,732 1095,732 1094,733 1093,733 1092,733 1091,733 1090,733 1089,732 1088,732 1087,733 1086,733 1085,732 1084,732 1083,732 1082,732 1081,732 1080,733 1079,733 1078,733 1077,732 1076,733 1075,732 1074,732 1073,732 1072,733 1071,732 1070,732 1069,732 1068,732 1067,732 1066,732 1065,732 1064,733 1063,732 1062,732 1061,732 1060,732 1059,733 1058,732 1057,732 1056,732 1055,732 1054,732 1053,732 1052,733 1051,732 1050,732 1049,733 1048,733 1047,732 1046,732 1045,733 1044,733 1043,733 1042,733 1041,732 1040,732 1039,732 1038,732 1037,733 1036,733 1035,734 1034,732 1033,733 1032,732 1031,733 1030,732 1029,732 1028,732 1027,733 1026,732 1025,733 1024,733 1023,732 1022,732 1021,732 1020,732 1019,732 1018,733 1017,732 1016,732 1015,733 1014,732 1013,732 1012,733 1011,733 1010,733 1009,733 1008,732 1007,732 1006,733 1005,732 1004,732 1003,732 1002,732 1001,733 1000,732 999,732 998,733 997,732 996,732 995,733 994,733 993,733 992,734 991,732 990,732 989,732 988,734 987,732 986,733 985,732 984,732 983,734 982,732 981,732 980,734 979,732 978,733 977,733 976,734 975,734 974,732 973,732 972,732 971,732 970,732 969,732 968,732 967,735 966,732 965,734 964,733 963,732 962,732 961,733 960,734 959,732 958,734 957,732 956,732 955,733 954,732 953,732 952,732 951,732 950,732 949,734 948,733 947,732 946,732 945,732 944,732 943,732 942,732 941,732 940,733 939,732 938,732 937,734 936,732 935,732 934,733 933,732 932,732 931,732 930,732 929,732 928,732 927,732 926,732 925,732 924,732 923,732 922,733 921,733 920,732 919,732 918,732 917,732 916,732 915,733 914,733 913,732 912,732 911,732 910,733 909,732 908,732 907,733 906,732 905,733 904,732 903,732 902,732 901,733 900,735 899,732 898,733 897,732 896,732 895,733 894,732 893,732 892,732 891,732 890,733 889,732 888,732 887,733 886,732 885,733 884,733 883,734 882,732 881,733 880,733 879,734 878,732 877,732 876,732 875,732 874,733 873,733 872,732 871,734 870,733 869,733 868,733 867,732 866,733 865,732 864,732 863,732 862,732 861,732 860,732 859,733 858,732 857,732 856,732 855,733 854,734 853,733 852,732 851,732 850,733 849,734 848,732 847,732 846,732 845,732 844,733 843,732 842,732 841,732 840,732 839,732 838,732 837,732 836,733 835,733 834,732 833,732 832,732 831,732 830,733 829,733 828,733 827,732 826,732 825,732 824,732 823,732 822,733 821,732 820,733 819,733 818,732 817,732 816,732 815,732 814,734 813,732 812,732 811,733 810,732 809,732 808,732 807,733 806,733 805,733 804,733 803,732 802,732 801,732 800,732 799,733 798,733 797,733 796,732 795,732 794,734 793,734 792,732 791,732 790,732 789,733 788,732 787,732 786,732 785,734 784,733 783,732 782,732 781,733 780,732 779,732 778,734 777,732 776,732 775,733 774,732 773,732 772,732 771,732 770,734 769,734 768,732 767,732 766,732 765,733 764,732 763,734 762,733 761,732 760,733 759,732 758,733 757,732 756,732 755,732 754,733 753,732 752,732 751,732 750,733 749,733 748,732 747,733 746,733 745,732 744,732 743,732 742,733 741,732 740,733 739,732 738,733 737,733 736,732 735,732 734,732 733,732 732,732 731,733 730,732 729,733 728,732 727,732 726,735 725,732 724,732 723,732 722,732 721,732 720,732 719,732 718,732 717,732 716,732 715,733 714,733 713,732 712,732 711,732 710,732 709,734 708,732 707,733 706,734 705,733 704,732 703,734 702,732 701,733 700,734 699,732 698,732 697,732 696,732 695,732 694,732 693,733 692,732 691,733 690,733 689,732 688,733 687,733 686,733 685,732 684,732 683,732 682,734 681,732 680,733 679,733 678,733 677,732 676,732 675,734 674,732 673,734 672,732 671,732 670,732 669,732 668,732 667,732 666,735 665,732 664,732 663,733 662,732 661,732 660,734 659,734 658,732 657,732 656,734 655,732 654,732 653,732 652,732 651,733 650,733 649,732 648,732 647,733 646,733 645,732 644,732 643,732 642,732 641,734 640,733 639,732 638,733 637,732 636,732 635,733 634,732 633,733 632,733 631,732 630,732 629,733 628,733 627,732 626,732 625,732 624,732 623,732 622,733 621,732 620,733 619,734 618,733 617,732 616,732 615,732 614,732 613,732 612,733 611,732 610,733 609,732 608,732 607,733 606,733 605,732 604,732 603,732 602,732 601,732 600,733 599,732 598,732 597,732 596,732 595,732 594,733 593,732 592,732 591,732 590,732 589,732 588,732 587,732 586,733 585,732 584,733 583,734 582,732 581,732 580,732 579,734 578,732 577,733 576,732 575,734 574,732 573,732 572,732 571,733 570,732 569,733 568,733 567,732 566,732 565,733 564,732 563,733 562,732 561,732 560,732 559,734 558,733 557,734 556,732 555,732 554,732 553,733 552,732 551,732 550,732 549,733 548,732 547,732 546,732 545,732 544,733 543,733 542,732 541,733 540,733 539,732 538,732 537,733 536,732 535,732 534,732 533,732 532,733 531,732 530,732 529,732 528,733 527,733 526,732 525,734 524,733 523,733 522,732 521,733 520,732 519,733 518,732 517,732 516,734 515,733 514,733 513,733 512,732 511,732 510,732 509,733 508,732 507,732 506,732 505,732 504,732 503,732 502,732 501,733 500,733 499,732 498,732 497,733 496,732 495,732 494,732 493,732 492,732 491,732 490,733 489,732 488,733 487,732 486,732 485,732 484,732 483,732 482,732 481,732 480,732 479,733 478,732 477,732 476,732 475,732 474,732 473,732 472,732 471,733 470,732 469,733 468,733 467,732 466,733 465,732 464,732 463,732 462,732 461,732 460,732 459,732 458,733 457,732 456,734 455,732 454,732 453,732 452,732 451,732 450,732 449,732 448,733 447,733 446,735 445,732 444,732 443,732 442,733 441,732 440,732 439,732 438,733 437,732 436,732 435,732 434,733 433,732 432,732 431,732 430,732 429,732 428,732 427,733 426,732 425,734 424,732 423,732 422,732 421,732 420,733 419,733 418,734 417,732 416,732 415,732 414,733 413,732 412,733 411,733 410,732 409,732 408,734 407,733 406,732 405,732 404,732 403,732 402,732 401,732 400,732 399,733 398,732 397,732 396,732 395,732 394,732 393,732 392,733 391,732 390,733 389,732 388,733 387,732 386,732 385,732 384,733 383,733 382,732 381,733 380,732 379,732 378,732 377,733 376,733 375,732 374,732 373,732 372,732 371,732 370,732 369,732 368,732 367,734 366,732 365,733 364,732 363,732 362,732 361,732 360,733 359,732 358,732 357,732 356,732 355,733 354,732 353,733 352,733 351,732 350,733 349,732 348,733 347,732 346,733 345,732 344,735 343,733 342,733 341,732 340,732 339,733 338,732 337,733 336,733 335,733 334,733 333,732 332,733 331,732 330,732 329,733 328,732 327,733 326,732 325,734 324,732 323,733 322,732 321,732 320,732 319,733 318,733 317,732 316,732 315,733 314,732 313,733 312,732 311,734 310,732 309,732 308,733 307,732 306,733 305,732 304,732 303,732 302,733 301,733 300,733 299,732 298,732 297,732 296,732 295,732 294,734 293,732 292,733 291,732 290,732 289,732 288,732 287,732 286,732 285,732 284,732 283,733 282,732 281,732 280,732 279,733 278,734 277,732 276,732 275,732 274,732 273,734 272,734 271,732 270,733 269,732 268,732 267,732 266,732 265,733 264,732 263,732 262,732 261,732 260,732 259,732 258,734 257,733 256,732 255,733 254,733 253,733 252,732 251,733 250,733 249,733 248,732 247,732 246,732 245,733 244,732 243,734 242,732 241,732 240,733 239,733 238,732 237,733 236,732 235,734 234,732 233,733 232,732 231,732 230,732 229,733 228,733 227,734 226,732 225,734 224,732 223,732 222,732 221,732 220,732 219,732 218,732 217,733 216,733 215,733 214,732 213,732 212,734 211,733 210,732 209,732 208,732 207,732 206,732 205,732 204,734 203,733 202,733 201,733 200,733 199,732 198,732 197,732 196,732 195,732 194,732 193,732 192,732 191,734 190,732 189,732 188,732 187,733 186,733 185,733 184,732 183,734 182,732 181,732 180,732 179,732 178,732 177,732 176,732 175,732 174,732 173,735 172,732 171,732 170,732 169,734 168,733 167,733 166,732 165,732 164,734 163,733 162,732 161,733 160,732 159,732 158,732 157,734 156,732 155,733 154,733 153,734 152,732 151,732 150,732 149,733 148,732 147,732 146,732 145,732 144,732 143,732 142,732 141,733 140,732 139,733 138,734 137,734 136,732 135,732 134,732 133,732 132,732 131,732 130,732 129,732 128,732 127,732 126,734 125,734 124,732 123,733 122,732 121,733 120,733 119,733 118,732 117,732 116,732 115,733 114,732 113,733 112,733 111,732 110,733 109,733 108,732 107,732 106,732 105,732 104,733 103,732 102,732 101,732 100,732 99,732 98,733 97,732 96,732 95,732 94,734 93,732 92,732 91,733 90,732 89,732 88,732 87,732 86,733 85,732 84,733 83,733 82,732 81,732 80,732 79,732 78,732 77,733 76,732 75,732 74,732 73,732 72,734 71,732 70,734 69,732 68,732 67,733 66,732 65,732 64,732 63,732 62,732 61,733 60,732 59,732 58,732 57,734 56,733 55,732 54,732 53,733 52,732 51,732 50,733 49,732 48,734 47,732 46,732 45,733 44,732 43,733 42,733 41,732 40,733 39,734 38,733 37,732 36,732 35,732 34,732 33,734 32,733 31,733 30,732 29,732 28,732 27,732 26,732 25,733 24,732 23,732 22,733 21,732 20,732 19,732 18,734 17,732 16,732 15,732 14,732 13,732 12,732 11,733 10,733 9,732 8,733 7,732 6,732 5,732 4,732 3,732" fill="#fff22c" shape-rendering="crispEdges"/>
<rect x="71" y="575" width="22" height="156" fill="#ffee00" opacity="0.35"/>
<rect x="75" y="575" width="6" height="156" fill="#ffea00" opacity="0.6"/>
<rect x="88" y="575" width="5" height="156" fill="#fff650" opacity="0.5"/>
<rect x="1470" y="575" width="22" height="156" fill="#ffee00" opacity="0.35"/>
<rect x="1474" y="575" width="6" height="156" fill="#ffea00" opacity="0.6"/>
<rect x="1487" y="575" width="5" height="156" fill="#fff650" opacity="0.5"/>
<rect x="93" y="575" width="442" height="156" fill="#ffee10" opacity="0.3"/>
<rect x="1492" y="575" width="259" height="156" fill="#ffee10" opacity="0.3"/>
<path d="M38 540h1v1h-1zM73 540h1v1h-1zM108 540h1v1h-1zM143 540h1v1h-1zM178 540h1v1h-1zM213 540h1v1h-1zM248 540h1v1h-1zM283 540h1v1h-1zM318 540h1v1h-1zM353 540h1v1h-1zM388 540h1v1h-1zM423 540h1v1h-1zM457 540h1v1h-1zM492 540h1v1h-1zM527 540h1v1h-1zM562 540h1v1h-1zM597 540h1v1h-1zM632 540h1v1h-1zM667 540h1v1h-1zM702 540h1v1h-1zM737 540h1v1h-1zM772 540h1v1h-1zM807 540h1v1h-1zM842 540h1v1h-1zM877 540h1v1h-1zM912 540h1v1h-1zM947 540h1v1h-1zM982 540h1v1h-1zM1017 540h1v1h-1zM1052 540h1v1h-1zM1087 540h1v1h-1zM1122 540h1v1h-1zM1157 540h1v1h-1zM1192 540h1v1h-1zM1227 540h1v1h-1zM1262 540h1v1h-1zM1297 540h1v1h-1zM1331 540h1v1h-1zM1366 540h1v1h-1zM1401 540h1v1h-1zM1436 540h1v1h-1zM1471 540h1v1h-1zM1506 540h1v1h-1zM1541 540h1v1h-1zM1576 540h1v1h-1zM1611 540h1v1h-1zM1646 540h1v1h-1zM1681 540h1v1h-1zM1716 540h1v1h-1zM38 562h1v1h-1zM73 562h1v1h-1zM108 562h1v1h-1zM143 562h1v1h-1zM178 562h1v1h-1zM213 562h1v1h-1zM248 562h1v1h-1zM283 562h1v1h-1zM318 562h1v1h-1zM353 562h1v1h-1zM388 562h1v1h-1zM423 562h1v1h-1zM457 562h1v1h-1zM492 562h1v1h-1zM527 562h1v1h-1zM562 562h1v1h-1zM597 562h1v1h-1zM632 562h1v1h-1zM667 562h1v1h-1zM702 562h1v1h-1zM737 562h1v1h-1zM772 562h1v1h-1zM807 562h1v1h-1zM842 562h1v1h-1zM877 562h1v1h-1zM912 562h1v1h-1zM947 562h1v1h-1zM982 562h1v1h-1zM1017 562h1v1h-1zM1052 562h1v1h-1zM1087 562h1v1h-1zM1122 562h1v1h-1zM1157 562h1v1h-1zM1192 562h1v1h-1zM1227 562h1v1h-1zM1262 562h1v1h-1zM1297 562h1v1h-1zM1331 562h1v1h-1zM1366 562h1v1h-1zM1401 562h1v1h-1zM1436 562h1v1h-1zM1471 562h1v1h-1zM1506 562h1v1h-1zM1541 562h1v1h-1zM1576 562h1v1h-1zM1611 562h1v1h-1zM1646 562h1v1h-1zM1681 562h1v1h-1zM1716 562h1v1h-1zM38 585h1v1h-1zM73 585h1v1h-1zM108 585h1v1h-1zM143 585h1v1h-1zM178 585h1v1h-1zM213 585h1v1h-1zM248 585h1v1h-1zM283 585h1v1h-1zM318 585h1v1h-1zM353 585h1v1h-1zM388 585h1v1h-1zM423 585h1v1h-1zM457 585h1v1h-1zM492 585h1v1h-1zM527 585h1v1h-1zM562 585h1v1h-1zM597 585h1v1h-1zM632 585h1v1h-1zM667 585h1v1h-1zM702 585h1v1h-1zM737 585h1v1h-1zM772 585h1v1h-1zM807 585h1v1h-1zM842 585h1v1h-1zM877 585h1v1h-1zM912 585h1v1h-1zM947 585h1v1h-1zM982 585h1v1h-1zM1017 585h1v1h-1zM1052 585h1v1h-1zM1087 585h1v1h-1zM1122 585h1v1h-1zM1157 585h1v1h-1zM1192 585h1v1h-1zM1227 585h1v1h-1zM1262 585h1v1h-1zM1297 585h1v1h-1zM1331 585h1v1h-1zM1366 585h1v1h-1zM1401 585h1v1h-1zM1436 585h1v1h-1zM1471 585h1v1h-1zM1506 585h1v1h-1zM1541 585h1v1h-1zM1576 585h1v1h-1zM1611 585h1v1h-1zM1646 585h1v1h-1zM1681 585h1v1h-1zM1716 585h1v1h-1zM38 607h1v1h-1zM73 607h1v1h-1zM108 607h1v1h-1zM143 607h1v1h-1zM178 607h1v1h-1zM213 607h1v1h-1zM248 607h1v1h-1zM283 607h1v1h-1zM318 607h1v1h-1zM353 607h1v1h-1zM388 607h1v1h-1zM423 607h1v1h-1zM457 607h1v1h-1zM492 607h1v1h-1zM527 607h1v1h-1zM562 607h1v1h-1zM597 607h1v1h-1zM632 607h1v1h-1zM667 607h1v1h-1zM702 607h1v1h-1zM737 607h1v1h-1zM772 607h1v1h-1zM807 607h1v1h-1zM842 607h1v1h-1zM877 607h1v1h-1zM912 607h1v1h-1zM947 607h1v1h-1zM982 607h1v1h-1zM1017 607h1v1h-1zM1052 607h1v1h-1zM1087 607h1v1h-1zM1122 607h1v1h-1zM1157 607h1v1h-1zM1192 607h1v1h-1zM1227 607h1v1h-1zM1262 607h1v1h-1zM1297 607h1v1h-1zM1331 607h1v1h-1zM1366 607h1v1h-1zM1401 607h1v1h-1zM1436 607h1v1h-1zM1471 607h1v1h-1zM1506 607h1v1h-1zM1541 607h1v1h-1zM1576 607h1v1h-1zM1611 607h1v1h-1zM1646 607h1v1h-1zM1681 607h1v1h-1zM1716 607h1v1h-1zM38 630h1v1h-1zM73 630h1v1h-1zM108 630h1v1h-1zM143 630h1v1h-1zM178 630h1v1h-1zM213 630h1v1h-1zM248 630h1v1h-1zM283 630h1v1h-1zM318 630h1v1h-1zM353 630h1v1h-1zM388 630h1v1h-1zM423 630h1v1h-1zM457 630h1v1h-1zM492 630h1v1h-1zM527 630h1v1h-1zM562 630h1v1h-1zM597 630h1v1h-1zM632 630h1v1h-1zM667 630h1v1h-1zM702 630h1v1h-1zM737 630h1v1h-1zM772 630h1v1h-1zM807 630h1v1h-1zM842 630h1v1h-1zM877 630h1v1h-1zM912 630h1v1h-1zM947 630h1v1h-1zM982 630h1v1h-1zM1017 630h1v1h-1zM1052 630h1v1h-1zM1087 630h1v1h-1zM1122 630h1v1h-1zM1157 630h1v1h-1zM1192 630h1v1h-1zM1227 630h1v1h-1zM1262 630h1v1h-1zM1297 630h1v1h-1zM1331 630h1v1h-1zM1366 630h1v1h-1zM1401 630h1v1h-1zM1436 630h1v1h-1zM1471 630h1v1h-1zM1506 630h1v1h-1zM1541 630h1v1h-1zM1576 630h1v1h-1zM1611 630h1v1h-1zM1646 630h1v1h-1zM1681 630h1v1h-1zM1716 630h1v1h-1zM38 652h1v1h-1zM73 652h1v1h-1zM108 652h1v1h-1zM143 652h1v1h-1zM178 652h1v1h-1zM213 652h1v1h-1zM248 652h1v1h-1zM283 652h1v1h-1zM318 652h1v1h-1zM353 652h1v1h-1zM388 652h1v1h-1zM423 652h1v1h-1zM457 652h1v1h-1zM492 652h1v1h-1zM527 652h1v1h-1zM562 652h1v1h-1zM597 652h1v1h-1zM632 652h1v1h-1zM667 652h1v1h-1zM702 652h1v1h-1zM737 652h1v1h-1zM772 652h1v1h-1zM807 652h1v1h-1zM842 652h1v1h-1zM877 652h1v1h-1zM912 652h1v1h-1zM947 652h1v1h-1zM982 652h1v1h-1zM1017 652h1v1h-1zM1052 652h1v1h-1zM1087 652h1v1h-1zM1122 652h1v1h-1zM1157 652h1v1h-1zM1192 652h1v1h-1zM1227 652h1v1h-1zM1262 652h1v1h-1zM1297 652h1v1h-1zM1331 652h1v1h-1zM1366 652h1v1h-1zM1401 652h1v1h-1zM1436 652h1v1h-1zM1471 652h1v1h-1zM1506 652h1v1h-1zM1541 652h1v1h-1zM1576 652h1v1h-1zM1611 652h1v1h-1zM1646 652h1v1h-1zM1681 652h1v1h-1zM1716 652h1v1h-1zM38 675h1v1h-1zM73 675h1v1h-1zM108 675h1v1h-1zM143 675h1v1h-1zM178 675h1v1h-1zM213 675h1v1h-1zM248 675h1v1h-1zM283 675h1v1h-1zM318 675h1v1h-1zM353 675h1v1h-1zM388 675h1v1h-1zM423 675h1v1h-1zM457 675h1v1h-1zM492 675h1v1h-1zM527 675h1v1h-1zM562 675h1v1h-1zM597 675h1v1h-1zM632 675h1v1h-1zM667 675h1v1h-1zM702 675h1v1h-1zM737 675h1v1h-1zM772 675h1v1h-1zM807 675h1v1h-1zM842 675h1v1h-1zM877 675h1v1h-1zM912 675h1v1h-1zM947 675h1v1h-1zM982 675h1v1h-1zM1017 675h1v1h-1zM1052 675h1v1h-1zM1087 675h1v1h-1zM1122 675h1v1h-1zM1157 675h1v1h-1zM1192 675h1v1h-1zM1227 675h1v1h-1zM1262 675h1v1h-1zM1297 675h1v1h-1zM1331 675h1v1h-1zM1366 675h1v1h-1zM1401 675h1v1h-1zM1436 675h1v1h-1zM1471 675h1v1h-1zM1506 675h1v1h-1zM1541 675h1v1h-1zM1576 675h1v1h-1zM1611 675h1v1h-1zM1646 675h1v1h-1zM1681 675h1v1h-1zM1716 675h1v1h-1zM38 697h1v1h-1zM73 697h1v1h-1zM108 697h1v1h-1zM143 697h1v1h-1zM178 697h1v1h-1zM213 697h1v1h-1zM248 697h1v1h-1zM283 697h1v1h-1zM318 697h1v1h-1zM353 697h1v1h-1zM388 697h1v1h-1zM423 697h1v1h-1zM457 697h1v1h-1zM492 697h1v1h-1zM527 697h1v1h-1zM562 697h1v1h-1zM597 697h1v1h-1zM632 697h1v1h-1zM667 697h1v1h-1zM702 697h1v1h-1zM737 697h1v1h-1zM772 697h1v1h-1zM807 697h1v1h-1zM842 697h1v1h-1zM877 697h1v1h-1zM912 697h1v1h-1zM947 697h1v1h-1zM982 697h1v1h-1zM1017 697h1v1h-1zM1052 697h1v1h-1zM1087 697h1v1h-1zM1122 697h1v1h-1zM1157 697h1v1h-1zM1192 697h1v1h-1zM1227 697h1v1h-1zM1262 697h1v1h-1zM1297 697h1v1h-1zM1331 697h1v1h-1zM1366 697h1v1h-1zM1401 697h1v1h-1zM1436 697h1v1h-1zM1471 697h1v1h-1zM1506 697h1v1h-1zM1541 697h1v1h-1zM1576 697h1v1h-1zM1611 697h1v1h-1zM1646 697h1v1h-1zM1681 697h1v1h-1zM1716 697h1v1h-1zM38 720h1v1h-1zM73 720h1v1h-1zM108 720h1v1h-1zM143 720h1v1h-1zM178 720h1v1h-1zM213 720h1v1h-1zM248 720h1v1h-1zM283 720h1v1h-1zM318 720h1v1h-1zM353 720h1v1h-1zM388 720h1v1h-1zM423 720h1v1h-1zM457 720h1v1h-1zM492 720h1v1h-1zM527 720h1v1h-1zM562 720h1v1h-1zM597 720h1v1h-1zM632 720h1v1h-1zM667 720h1v1h-1zM702 720h1v1h-1zM737 720h1v1h-1zM772 720h1v1h-1zM807 720h1v1h-1zM842 720h1v1h-1zM877 720h1v1h-1zM912 720h1v1h-1zM947 720h1v1h-1zM982 720h1v1h-1zM1017 720h1v1h-1zM1052 720h1v1h-1zM1087 720h1v1h-1zM1122 720h1v1h-1zM1157 720h1v1h-1zM1192 720h1v1h-1zM1227 720h1v1h-1zM1262 720h1v1h-1zM1297 720h1v1h-1zM1331 720h1v1h-1zM1366 720h1v1h-1zM1401 720h1v1h-1zM1436 720h1v1h-1zM1471 720h1v1h-1zM1506 720h1v1h-1zM1541 720h1v1h-1zM1576 720h1v1h-1zM1611 720h1v1h-1zM1646 720h1v1h-1zM1681 720h1v1h-1zM1716 720h1v1h-1zM38 742h1v1h-1zM73 742h1v1h-1zM108 742h1v1h-1zM143 742h1v1h-1zM178 742h1v1h-1zM213 742h1v1h-1zM248 742h1v1h-1zM283 742h1v1h-1zM318 742h1v1h-1zM353 742h1v1h-1zM388 742h1v1h-1zM423 742h1v1h-1zM457 742h1v1h-1zM492 742h1v1h-1zM527 742h1v1h-1zM562 742h1v1h-1zM597 742h1v1h-1zM632 742h1v1h-1zM667 742h1v1h-1zM702 742h1v1h-1zM737 742h1v1h-1zM772 742h1v1h-1zM807 742h1v1h-1zM842 742h1v1h-1zM877 742h1v1h-1zM912 742h1v1h-1zM947 742h1v1h-1zM982 742h1v1h-1zM1017 742h1v1h-1zM1052 742h1v1h-1zM1087 742h1v1h-1zM1122 742h1v1h-1zM1157 742h1v1h-1zM1192 742h1v1h-1zM1227 742h1v1h-1zM1262 742h1v1h-1zM1297 742h1v1h-1zM1331 742h1v1h-1zM1366 742h1v1h-1zM1401 742h1v1h-1zM1436 742h1v1h-1zM1471 742h1v1h-1zM1506 742h1v1h-1zM1541 742h1v1h-1zM1576 742h1v1h-1zM1611 742h1v1h-1zM1646 742h1v1h-1zM1681 742h1v1h-1zM1716 742h1v1h-1z" fill="#b0b0b0"/>
<path d="M178 540h1v1h-1zM178 544h1v1h-1zM178 549h1v1h-1zM178 553h1v1h-1zM178 558h1v1h-1zM178 562h1v1h-1zM178 567h1v1h-1zM178 571h1v1h-1zM178 576h1v1h-1zM178 580h1v1h-1zM178 585h1v1h-1zM178 589h1v1h-1zM178 594h1v1h-1zM178 598h1v1h-1zM178 603h1v1h-1zM178 607h1v1h-1zM178 612h1v1h-1zM178 616h1v1h-1zM178 621h1v1h-1zM178 625h1v1h-1zM178 630h1v1h-1zM178 634h1v1h-1zM178 639h1v1h-1zM178 643h1v1h-1zM178 648h1v1h-1zM178 652h1v1h-1zM178 657h1v1h-1zM178 661h1v1h-1zM178 666h1v1h-1zM178 670h1v1h-1zM178 675h1v1h-1zM178 679h1v1h-1zM178 684h1v1h-1zM178 688h1v1h-1zM178 693h1v1h-1zM178 697h1v1h-1zM178 702h1v1h-1zM178 706h1v1h-1zM178 711h1v1h-1zM178 715h1v1h-1zM178 720h1v1h-1zM178 724h1v1h-1zM178 729h1v1h-1zM178 733h1v1h-1zM178 738h1v1h-1zM178 742h1v1h-1zM178 747h1v1h-1zM178 751h1v1h-1zM178 756h1v1h-1zM178 760h1v1h-1zM353 540h1v1h-1zM353 544h1v1h-1zM353 549h1v1h-1zM353 553h1v1h-1zM353 558h1v1h-1zM353 562h1v1h-1zM353 567h1v1h-1zM353 571h1v1h-1zM353 576h1v1h-1zM353 580h1v1h-1zM353 585h1v1h-1zM353 589h1v1h-1zM353 594h1v1h-1zM353 598h1v1h-1zM353 603h1v1h-1zM353 607h1v1h-1zM353 612h1v1h-1zM353 616h1v1h-1zM353 621h1v1h-1zM353 625h1v1h-1zM353 630h1v1h-1zM353 634h1v1h-1zM353 639h1v1h-1zM353 643h1v1h-1zM353 648h1v1h-1zM353 652h1v1h-1zM353 657h1v1h-1zM353 661h1v1h-1zM353 666h1v1h-1zM353 670h1v1h-1zM353 675h1v1h-1zM353 679h1v1h-1zM353 684h1v1h-1zM353 688h1v1h-1zM353 693h1v1h-1zM353 697h1v1h-1zM353 702h1v1h-1zM353 706h1v1h-1zM353 711h1v1h-1zM353 715h1v1h-1zM353 720h1v1h-1zM353 724h1v1h-1zM353 729h1v1h-1zM353 733h1v1h-1zM353 738h1v1h-1zM353 742h1v1h-1zM353 747h1v1h-1zM353 751h1v1h-1zM353 756h1v1h-1zM353 760h1v1h-1zM527 540h1v1h-1zM527 544h1v1h-1zM527 549h1v1h-1zM527 553h1v1h-1zM527 558h1v1h-1zM527 562h1v1h-1zM527 567h1v1h-1zM527 571h1v1h-1zM527 576h1v1h-1zM527 580h1v1h-1zM527 585h1v1h-1zM527 589h1v1h-1zM527 594h1v1h-1zM527 598h1v1h-1zM527 603h1v1h-1zM527 607h1v1h-1zM527 612h1v1h-1zM527 616h1v1h-1zM527 621h1v1h-1zM527 625h1v1h-1zM527 630h1v1h-1zM527 634h1v1h-1zM527 639h1v1h-1zM527 643h1v1h-1zM527 648h1v1h-1zM527 652h1v1h-1zM527 657h1v1h-1zM527 661h1v1h-1zM527 666h1v1h-1zM527 670h1v1h-1zM527 675h1v1h-1zM527 679h1v1h-1zM527 684h1v1h-1zM527 688h1v1h-1zM527 693h1v1h-1zM527 697h1v1h-1zM527 702h1v1h-1zM527 706h1v1h-1zM527 711h1v1h-1zM527 715h1v1h-1zM527 720h1v1h-1zM527 724h1v1h-1zM527 729h1v1h-1zM527 733h1v1h-1zM527 738h1v1h-1zM527 742h1v1h-1zM527 747h1v1h-1zM527 751h1v1h-1zM527 756h1v1h-1zM527 760h1v1h-1zM702 540h1v1h-1zM702 544h1v1h-1zM702 549h1v1h-1zM702 553h1v1h-1zM702 558h1v1h-1zM702 562h1v1h-1zM702 567h1v1h-1zM702 571h1v1h-1zM702 576h1v1h-1zM702 580h1v1h-1zM702 585h1v1h-1zM702 589h1v1h-1zM702 594h1v1h-1zM702 598h1v1h-1zM702 603h1v1h-1zM702 607h1v1h-1zM702 612h1v1h-1zM702 616h1v1h-1zM702 621h1v1h-1zM702 625h1v1h-1zM702 630h1v1h-1zM702 634h1v1h-1zM702 639h1v1h-1zM702 643h1v1h-1zM702 648h1v1h-1zM702 652h1v1h-1zM702 657h1v1h-1zM702 661h1v1h-1zM702 666h1v1h-1zM702 670h1v1h-1zM702 675h1v1h-1zM702 679h1v1h-1zM702 684h1v1h-1zM702 688h1v1h-1zM702 693h1v1h-1zM702 697h1v1h-1zM702 702h1v1h-1zM702 706h1v1h-1zM702 711h1v1h-1zM702 715h1v1h-1zM702 720h1v1h-1zM702 724h1v1h-1zM702 729h1v1h-1zM702 733h1v1h-1zM702 738h1v1h-1zM702 742h1v1h-1zM702 747h1v1h-1zM702 751h1v1h-1zM702 756h1v1h-1zM702 760h1v1h-1zM877 540h1v1h-1zM877 544h1v1h-1zM877 549h1v1h-1zM877 553h1v1h-1zM877 558h1v1h-1zM877 562h1v1h-1zM877 567h1v1h-1zM877 571h1v1h-1zM877 576h1v1h-1zM877 580h1v1h-1zM877 585h1v1h-1zM877 589h1v1h-1zM877 594h1v1h-1zM877 598h1v1h-1zM877 603h1v1h-1zM877 607h1v1h-1zM877 612h1v1h-1zM877 616h1v1h-1zM877 621h1v1h-1zM877 625h1v1h-1zM877 630h1v1h-1zM877 634h1v1h-1zM877 639h1v1h-1zM877 643h1v1h-1zM877 648h1v1h-1zM877 652h1v1h-1zM877 657h1v1h-1zM877 661h1v1h-1zM877 666h1v1h-1zM877 670h1v1h-1zM877 675h1v1h-1zM877 679h1v1h-1zM877 684h1v1h-1zM877 688h1v1h-1zM877 693h1v1h-1zM877 697h1v1h-1zM877 702h1v1h-1zM877 706h1v1h-1zM877 711h1v1h-1zM877 715h1v1h-1zM877 720h1v1h-1zM877 724h1v1h-1zM877 729h1v1h-1zM877 733h1v1h-1zM877 738h1v1h-1zM877 742h1v1h-1zM877 747h1v1h-1zM877 751h1v1h-1zM877 756h1v1h-1zM877 760h1v1h-1zM1052 540h1v1h-1zM1052 544h1v1h-1zM1052 549h1v1h-1zM1052 553h1v1h-1zM1052 558h1v1h-1zM1052 562h1v1h-1zM1052 567h1v1h-1zM1052 571h1v1h-1zM1052 576h1v1h-1zM1052 580h1v1h-1zM1052 585h1v1h-1zM1052 589h1v1h-1zM1052 594h1v1h-1zM1052 598h1v1h-1zM1052 603h1v1h-1zM1052 607h1v1h-1zM1052 612h1v1h-1zM1052 616h1v1h-1zM1052 621h1v1h-1zM1052 625h1v1h-1zM1052 630h1v1h-1zM1052 634h1v1h-1zM1052 639h1v1h-1zM1052 643h1v1h-1zM1052 648h1v1h-1zM1052 652h1v1h-1zM1052 657h1v1h-1zM1052 661h1v1h-1zM1052 666h1v1h-1zM1052 670h1v1h-1zM1052 675h1v1h-1zM1052 679h1v1h-1zM1052 684h1v1h-1zM1052 688h1v1h-1zM1052 693h1v1h-1zM1052 697h1v1h-1zM1052 702h1v1h-1zM1052 706h1v1h-1zM1052 711h1v1h-1zM1052 715h1v1h-1zM1052 720h1v1h-1zM1052 724h1v1h-1zM1052 729h1v1h-1zM1052 733h1v1h-1zM1052 738h1v1h-1zM1052 742h1v1h-1zM1052 747h1v1h-1zM1052 751h1v1h-1zM1052 756h1v1h-1zM1052 760h1v1h-1zM1227 540h1v1h-1zM1227 544h1v1h-1zM1227 549h1v1h-1zM1227 553h1v1h-1zM1227 558h1v1h-1zM1227 562h1v1h-1zM1227 567h1v1h-1zM1227 571h1v1h-1zM1227 576h1v1h-1zM1227 580h1v1h-1zM1227 585h1v1h-1zM1227 589h1v1h-1zM1227 594h1v1h-1zM1227 598h1v1h-1zM1227 603h1v1h-1zM1227 607h1v1h-1zM1227 612h1v1h-1zM1227 616h1v1h-1zM1227 621h1v1h-1zM1227 625h1v1h-1zM1227 630h1v1h-1zM1227 634h1v1h-1zM1227 639h1v1h-1zM1227 643h1v1h-1zM1227 648h1v1h-1zM1227 652h1v1h-1zM1227 657h1v1h-1zM1227 661h1v1h-1zM1227 666h1v1h-1zM1227 670h1v1h-1zM1227 675h1v1h-1zM1227 679h1v1h-1zM1227 684h1v1h-1zM1227 688h1v1h-1zM1227 693h1v1h-1zM1227 697h1v1h-1zM1227 702h1v1h-1zM1227 706h1v1h-1zM1227 711h1v1h-1zM1227 715h1v1h-1zM1227 720h1v1h-1zM1227 724h1v1h-1zM1227 729h1v1h-1zM1227 733h1v1h-1zM1227 738h1v1h-1zM1227 742h1v1h-1zM1227 747h1v1h-1zM1227 751h1v1h-1zM1227 756h1v1h-1zM1227 760h1v1h-1zM1401 540h1v1h-1zM1401 544h1v1h-1zM1401 549h1v1h-1zM1401 553h1v1h-1zM1401 558h1v1h-1zM1401 562h1v1h-1zM1401 567h1v1h-1zM1401 571h1v1h-1zM1401 576h1v1h-1zM1401 580h1v1h-1zM1401 585h1v1h-1zM1401 589h1v1h-1zM1401 594h1v1h-1zM1401 598h1v1h-1zM1401 603h1v1h-1zM1401 607h1v1h-1zM1401 612h1v1h-1zM1401 616h1v1h-1zM1401 621h1v1h-1zM1401 625h1v1h-1zM1401 630h1v1h-1zM1401 634h1v1h-1zM1401 639h1v1h-1zM1401 643h1v1h-1zM1401 648h1v1h-1zM1401 652h1v1h-1zM1401 657h1v1h-1zM1401 661h1v1h-1zM1401 666h1v1h-1zM1401 670h1v1h-1zM1401 675h1v1h-1zM1401 679h1v1h-1zM1401 684h1v1h-1zM1401 688h1v1h-1zM1401 693h1v1h-1zM1401 697h1v1h-1zM1401 702h1v1h-1zM1401 706h1v1h-1zM1401 711h1v1h-1zM1401 715h1v1h-1zM1401 720h1v1h-1zM1401 724h1v1h-1zM1401 729h1v1h-1zM1401 733h1v1h-1zM1401 738h1v1h-1zM1401 742h1v1h-1zM1401 747h1v1h-1zM1401 751h1v1h-1zM1401 756h1v1h-1zM1401 760h1v1h-1zM1576 540h1v1h-1zM1576 544h1v1h-1zM1576 549h1v1h-1zM1576 553h1v1h-1zM1576 558h1v1h-1zM1576 562h1v1h-1zM1576 567h1v1h-1zM1576 571h1v1h-1zM1576 576h1v1h-1zM1576 580h1v1h-1zM1576 585h1v1h-1zM1576 589h1v1h-1zM1576 594h1v1h-1zM1576 598h1v1h-1zM1576 603h1v1h-1zM1576 607h1v1h-1zM1576 612h1v1h-1zM1576 616h1v1h-1zM1576 621h1v1h-1zM1576 625h1v1h-1zM1576 630h1v1h-1zM1576 634h1v1h-1zM1576 639h1v1h-1zM1576 643h1v1h-1zM1576 648h1v1h-1zM1576 652h1v1h-1zM1576 657h1v1h-1zM1576 661h1v1h-1zM1576 666h1v1h-1zM1576 670h1v1h-1zM1576 675h1v1h-1zM1576 679h1v1h-1zM1576 684h1v1h-1zM1576 688h1v1h-1zM1576 693h1v1h-1zM1576 697h1v1h-1zM1576 702h1v1h-1zM1576 706h1v1h-1zM1576 711h1v1h-1zM1576 715h1v1h-1zM1576 720h1v1h-1zM1576 724h1v1h-1zM1576 729h1v1h-1zM1576 733h1v1h-1zM1576 738h1v1h-1zM1576 742h1v1h-1zM1576 747h1v1h-1zM1576 751h1v1h-1zM1576 756h1v1h-1zM1576 760h1v1h-1z" fill="#b0b0b0"/>
<path d="M3 540h1v1h-1zM3 544h1v1h-1zM3 549h1v1h-1zM3 553h1v1h-1zM3 558h1v1h-1zM3 562h1v1h-1zM3 567h1v1h-1zM3 571h1v1h-1zM3 576h1v1h-1zM3 580h1v1h-1zM3 585h1v1h-1zM3 589h1v1h-1zM3 594h1v1h-1zM3 598h1v1h-1zM3 603h1v1h-1zM3 607h1v1h-1zM3 612h1v1h-1zM3 616h1v1h-1zM3 621h1v1h-1zM3 625h1v1h-1zM3 630h1v1h-1zM3 634h1v1h-1zM3 639h1v1h-1zM3 643h1v1h-1zM3 648h1v1h-1zM3 652h1v1h-1zM3 657h1v1h-1zM3 661h1v1h-1zM3 666h1v1h-1zM3 670h1v1h-1zM3 675h1v1h-1zM3 679h1v1h-1zM3 684h1v1h-1zM3 688h1v1h-1zM3 693h1v1h-1zM3 697h1v1h-1zM3 702h1v1h-1zM3 706h1v1h-1zM3 711h1v1h-1zM3 715h1v1h-1zM3 720h1v1h-1zM3 724h1v1h-1zM3 729h1v1h-1zM3 733h1v1h-1zM3 738h1v1h-1zM3 742h1v1h-1zM3 747h1v1h-1zM3 751h1v1h-1zM3 756h1v1h-1zM3 760h1v1h-1z" fill="#808080"/>
<path d="M38 767h1v1h-1zM73 767h1v1h-1zM108 767h1v1h-1zM143 767h1v1h-1zM178 767h1v1h-1zM213 767h1v1h-1zM248 767h1v1h-1zM283 767h1v1h-1zM318 767h1v1h-1zM353 767h1v1h-1zM388 767h1v1h-1zM423 767h1v1h-1zM457 767h1v1h-1zM492 767h1v1h-1zM527 767h1v1h-1zM562 767h1v1h-1zM597 767h1v1h-1zM632 767h1v1h-1zM667 767h1v1h-1zM702 767h1v1h-1zM737 767h1v1h-1zM772 767h1v1h-1zM807 767h1v1h-1zM842 767h1v1h-1zM877 767h1v1h-1zM912 767h1v1h-1zM947 767h1v1h-1zM982 767h1v1h-1zM1017 767h1v1h-1zM1052 767h1v1h-1zM1087 767h1v1h-1zM1122 767h1v1h-1zM1157 767h1v1h-1zM1192 767h1v1h-1zM1227 767h1v1h-1zM1262 767h1v1h-1zM1297 767h1v1h-1zM1331 767h1v1h-1zM1366 767h1v1h-1zM1401 767h1v1h-1zM1436 767h1v1h-1zM1471 767h1v1h-1zM1506 767h1v1h-1zM1541 767h1v1h-1zM1576 767h1v1h-1zM1611 767h1v1h-1zM1646 767h1v1h-1zM1681 767h1v1h-1zM1716 767h1v1h-1zM38 790h1v1h-1zM73 790h1v1h-1zM108 790h1v1h-1zM143 790h1v1h-1zM178 790h1v1h-1zM213 790h1v1h-1zM248 790h1v1h-1zM283 790h1v1h-1zM318 790h1v1h-1zM353 790h1v1h-1zM388 790h1v1h-1zM423 790h1v1h-1zM457 790h1v1h-1zM492 790h1v1h-1zM527 790h1v1h-1zM562 790h1v1h-1zM597 790h1v1h-1zM632 790h1v1h-1zM667 790h1v1h-1zM702 790h1v1h-1zM737 790h1v1h-1zM772 790h1v1h-1zM807 790h1v1h-1zM842 790h1v1h-1zM877 790h1v1h-1zM912 790h1v1h-1zM947 790h1v1h-1zM982 790h1v1h-1zM1017 790h1v1h-1zM1052 790h1v1h-1zM1087 790h1v1h-1zM1122 790h1v1h-1zM1157 790h1v1h-1zM1192 790h1v1h-1zM1227 790h1v1h-1zM1262 790h1v1h-1zM1297 790h1v1h-1zM1331 790h1v1h-1zM1366 790h1v1h-1zM1401 790h1v1h-1zM1436 790h1v1h-1zM1471 790h1v1h-1zM1506 790h1v1h-1zM1541 790h1v1h-1zM1576 790h1v1h-1zM1611 790h1v1h-1zM1646 790h1v1h-1zM1681 790h1v1h-1zM1716 790h1v1h-1zM38 812h1v1h-1zM73 812h1v1h-1zM108 812h1v1h-1zM143 812h1v1h-1zM178 812h1v1h-1zM213 812h1v1h-1zM248 812h1v1h-1zM283 812h1v1h-1zM318 812h1v1h-1zM353 812h1v1h-1zM388 812h1v1h-1zM423 812h1v1h-1zM457 812h1v1h-1zM492 812h1v1h-1zM527 812h1v1h-1zM562 812h1v1h-1zM597 812h1v1h-1zM632 812h1v1h-1zM667 812h1v1h-1zM702 812h1v1h-1zM737 812h1v1h-1zM772 812h1v1h-1zM807 812h1v1h-1zM842 812h1v1h-1zM877 812h1v1h-1zM912 812h1v1h-1zM947 812h1v1h-1zM982 812h1v1h-1zM1017 812h1v1h-1zM1052 812h1v1h-1zM1087 812h1v1h-1zM1122 812h1v1h-1zM1157 812h1v1h-1zM1192 812h1v1h-1zM1227 812h1v1h-1zM1262 812h1v1h-1zM1297 812h1v1h-1zM1331 812h1v1h-1zM1366 812h1v1h-1zM1401 812h1v1h-1zM1436 812h1v1h-1zM1471 812h1v1h-1zM1506 812h1v1h-1zM1541 812h1v1h-1zM1576 812h1v1h-1zM1611 812h1v1h-1zM1646 812h1v1h-1zM1681 812h1v1h-1zM1716 812h1v1h-1zM38 835h1v1h-1zM73 835h1v1h-1zM108 835h1v1h-1zM143 835h1v1h-1zM178 835h1v1h-1zM213 835h1v1h-1zM248 835h1v1h-1zM283 835h1v1h-1zM318 835h1v1h-1zM353 835h1v1h-1zM388 835h1v1h-1zM423 835h1v1h-1zM457 835h1v1h-1zM492 835h1v1h-1zM527 835h1v1h-1zM562 835h1v1h-1zM597 835h1v1h-1zM632 835h1v1h-1zM667 835h1v1h-1zM702 835h1v1h-1zM737 835h1v1h-1zM772 835h1v1h-1zM807 835h1v1h-1zM842 835h1v1h-1zM877 835h1v1h-1zM912 835h1v1h-1zM947 835h1v1h-1zM982 835h1v1h-1zM1017 835h1v1h-1zM1052 835h1v1h-1zM1087 835h1v1h-1zM1122 835h1v1h-1zM1157 835h1v1h-1zM1192 835h1v1h-1zM1227 835h1v1h-1zM1262 835h1v1h-1zM1297 835h1v1h-1zM1331 835h1v1h-1zM1366 835h1v1h-1zM1401 835h1v1h-1zM1436 835h1v1h-1zM1471 835h1v1h-1zM1506 835h1v1h-1zM1541 835h1v1h-1zM1576 835h1v1h-1zM1611 835h1v1h-1zM1646 835h1v1h-1zM1681 835h1v1h-1zM1716 835h1v1h-1zM38 857h1v1h-1zM73 857h1v1h-1zM108 857h1v1h-1zM143 857h1v1h-1zM178 857h1v1h-1zM213 857h1v1h-1zM248 857h1v1h-1zM283 857h1v1h-1zM318 857h1v1h-1zM353 857h1v1h-1zM388 857h1v1h-1zM423 857h1v1h-1zM457 857h1v1h-1zM492 857h1v1h-1zM527 857h1v1h-1zM562 857h1v1h-1zM597 857h1v1h-1zM632 857h1v1h-1zM667 857h1v1h-1zM702 857h1v1h-1zM737 857h1v1h-1zM772 857h1v1h-1zM807 857h1v1h-1zM842 857h1v1h-1zM877 857h1v1h-1zM912 857h1v1h-1zM947 857h1v1h-1zM982 857h1v1h-1zM1017 857h1v1h-1zM1052 857h1v1h-1zM1087 857h1v1h-1zM1122 857h1v1h-1zM1157 857h1v1h-1zM1192 857h1v1h-1zM1227 857h1v1h-1zM1262 857h1v1h-1zM1297 857h1v1h-1zM1331 857h1v1h-1zM1366 857h1v1h-1zM1401 857h1v1h-1zM1436 857h1v1h-1zM1471 857h1v1h-1zM1506 857h1v1h-1zM1541 857h1v1h-1zM1576 857h1v1h-1zM1611 857h1v1h-1zM1646 857h1v1h-1zM1681 857h1v1h-1zM1716 857h1v1h-1zM38 880h1v1h-1zM73 880h1v1h-1zM108 880h1v1h-1zM143 880h1v1h-1zM178 880h1v1h-1zM213 880h1v1h-1zM248 880h1v1h-1zM283 880h1v1h-1zM318 880h1v1h-1zM353 880h1v1h-1zM388 880h1v1h-1zM423 880h1v1h-1zM457 880h1v1h-1zM492 880h1v1h-1zM527 880h1v1h-1zM562 880h1v1h-1zM597 880h1v1h-1zM632 880h1v1h-1zM667 880h1v1h-1zM702 880h1v1h-1zM737 880h1v1h-1zM772 880h1v1h-1zM807 880h1v1h-1zM842 880h1v1h-1zM877 880h1v1h-1zM912 880h1v1h-1zM947 880h1v1h-1zM982 880h1v1h-1zM1017 880h1v1h-1zM1052 880h1v1h-1zM1087 880h1v1h-1zM1122 880h1v1h-1zM1157 880h1v1h-1zM1192 880h1v1h-1zM1227 880h1v1h-1zM1262 880h1v1h-1zM1297 880h1v1h-1zM1331 880h1v1h-1zM1366 880h1v1h-1zM1401 880h1v1h-1zM1436 880h1v1h-1zM1471 880h1v1h-1zM1506 880h1v1h-1zM1541 880h1v1h-1zM1576 880h1v1h-1zM1611 880h1v1h-1zM1646 880h1v1h-1zM1681 880h1v1h-1zM1716 880h1v1h-1zM38 902h1v1h-1zM73 902h1v1h-1zM108 902h1v1h-1zM143 902h1v1h-1zM178 902h1v1h-1zM213 902h1v1h-1zM248 902h1v1h-1zM283 902h1v1h-1zM318 902h1v1h-1zM353 902h1v1h-1zM388 902h1v1h-1zM423 902h1v1h-1zM457 902h1v1h-1zM492 902h1v1h-1zM527 902h1v1h-1zM562 902h1v1h-1zM597 902h1v1h-1zM632 902h1v1h-1zM667 902h1v1h-1zM702 902h1v1h-1zM737 902h1v1h-1zM772 902h1v1h-1zM807 902h1v1h-1zM842 902h1v1h-1zM877 902h1v1h-1zM912 902h1v1h-1zM947 902h1v1h-1zM982 902h1v1h-1zM1017 902h1v1h-1zM1052 902h1v1h-1zM1087 902h1v1h-1zM1122 902h1v1h-1zM1157 902h1v1h-1zM1192 902h1v1h-1zM1227 902h1v1h-1zM1262 902h1v1h-1zM1297 902h1v1h-1zM1331 902h1v1h-1zM1366 902h1v1h-1zM1401 902h1v1h-1zM1436 902h1v1h-1zM1471 902h1v1h-1zM1506 902h1v1h-1zM1541 902h1v1h-1zM1576 902h1v1h-1zM1611 902h1v1h-1zM1646 902h1v1h-1zM1681 902h1v1h-1zM1716 902h1v1h-1zM38 925h1v1h-1zM73 925h1v1h-1zM108 925h1v1h-1zM143 925h1v1h-1zM178 925h1v1h-1zM213 925h1v1h-1zM248 925h1v1h-1zM283 925h1v1h-1zM318 925h1v1h-1zM353 925h1v1h-1zM388 925h1v1h-1zM423 925h1v1h-1zM457 925h1v1h-1zM492 925h1v1h-1zM527 925h1v1h-1zM562 925h1v1h-1zM597 925h1v1h-1zM632 925h1v1h-1zM667 925h1v1h-1zM702 925h1v1h-1zM737 925h1v1h-1zM772 925h1v1h-1zM807 925h1v1h-1zM842 925h1v1h-1zM877 925h1v1h-1zM912 925h1v1h-1zM947 925h1v1h-1zM982 925h1v1h-1zM1017 925h1v1h-1zM1052 925h1v1h-1zM1087 925h1v1h-1zM1122 925h1v1h-1zM1157 925h1v1h-1zM1192 925h1v1h-1zM1227 925h1v1h-1zM1262 925h1v1h-1zM1297 925h1v1h-1zM1331 925h1v1h-1zM1366 925h1v1h-1zM1401 925h1v1h-1zM1436 925h1v1h-1zM1471 925h1v1h-1zM1506 925h1v1h-1zM1541 925h1v1h-1zM1576 925h1v1h-1zM1611 925h1v1h-1zM1646 925h1v1h-1zM1681 925h1v1h-1zM1716 925h1v1h-1zM38 947h1v1h-1zM73 947h1v1h-1zM108 947h1v1h-1zM143 947h1v1h-1zM178 947h1v1h-1zM213 947h1v1h-1zM248 947h1v1h-1zM283 947h1v1h-1zM318 947h1v1h-1zM353 947h1v1h-1zM388 947h1v1h-1zM423 947h1v1h-1zM457 947h1v1h-1zM492 947h1v1h-1zM527 947h1v1h-1zM562 947h1v1h-1zM597 947h1v1h-1zM632 947h1v1h-1zM667 947h1v1h-1zM702 947h1v1h-1zM737 947h1v1h-1zM772 947h1v1h-1zM807 947h1v1h-1zM842 947h1v1h-1zM877 947h1v1h-1zM912 947h1v1h-1zM947 947h1v1h-1zM982 947h1v1h-1zM1017 947h1v1h-1zM1052 947h1v1h-1zM1087 947h1v1h-1zM1122 947h1v1h-1zM1157 947h1v1h-1zM1192 947h1v1h-1zM1227 947h1v1h-1zM1262 947h1v1h-1zM1297 947h1v1h-1zM1331 947h1v1h-1zM1366 947h1v1h-1zM1401 947h1v1h-1zM1436 947h1v1h-1zM1471 947h1v1h-1zM1506 947h1v1h-1zM1541 947h1v1h-1zM1576 947h1v1h-1zM1611 947h1v1h-1zM1646 947h1v1h-1zM1681 947h1v1h-1zM1716 947h1v1h-1zM38 970h1v1h-1zM73 970h1v1h-1zM108 970h1v1h-1zM143 970h1v1h-1zM178 970h1v1h-1zM213 970h1v1h-1zM248 970h1v1h-1zM283 970h1v1h-1zM318 970h1v1h-1zM353 970h1v1h-1zM388 970h1v1h-1zM423 970h1v1h-1zM457 970h1v1h-1zM492 970h1v1h-1zM527 970h1v1h-1zM562 970h1v1h-1zM597 970h1v1h-1zM632 970h1v1h-1zM667 970h1v1h-1zM702 970h1v1h-1zM737 970h1v1h-1zM772 970h1v1h-1zM807 970h1v1h-1zM842 970h1v1h-1zM877 970h1v1h-1zM912 970h1v1h-1zM947 970h1v1h-1zM982 970h1v1h-1zM1017 970h1v1h-1zM1052 970h1v1h-1zM1087 970h1v1h-1zM1122 970h1v1h-1zM1157 970h1v1h-1zM1192 970h1v1h-1zM1227 970h1v1h-1zM1262 970h1v1h-1zM1297 970h1v1h-1zM1331 970h1v1h-1zM1366 970h1v1h-1zM1401 970h1v1h-1zM1436 970h1v1h-1zM1471 970h1v1h-1zM1506 970h1v1h-1zM1541 970h1v1h-1zM1576 970h1v1h-1zM1611 970h1v1h-1zM1646 970h1v1h-1zM1681 970h1v1h-1zM1716 970h1v1h-1z" fill="#b0b0b0"/>
<path d="M178 767h1v1h-1zM178 772h1v1h-1zM178 776h1v1h-1zM178 781h1v1h-1zM178 785h1v1h-1zM178 790h1v1h-1zM178 794h1v1h-1zM178 799h1v1h-1zM178 803h1v1h-1zM178 808h1v1h-1zM178 812h1v1h-1zM178 817h1v1h-1zM178 821h1v1h-1zM178 826h1v1h-1zM178 830h1v1h-1zM178 835h1v1h-1zM178 839h1v1h-1zM178 844h1v1h-1zM178 848h1v1h-1zM178 853h1v1h-1zM178 857h1v1h-1zM178 862h1v1h-1zM178 866h1v1h-1zM178 871h1v1h-1zM178 875h1v1h-1zM178 880h1v1h-1zM178 884h1v1h-1zM178 889h1v1h-1zM178 893h1v1h-1zM178 898h1v1h-1zM178 902h1v1h-1zM178 907h1v1h-1zM178 911h1v1h-1zM178 916h1v1h-1zM178 920h1v1h-1zM178 925h1v1h-1zM178 929h1v1h-1zM178 934h1v1h-1zM178 938h1v1h-1zM178 943h1v1h-1zM178 947h1v1h-1zM178 952h1v1h-1zM178 956h1v1h-1zM178 961h1v1h-1zM178 965h1v1h-1zM178 970h1v1h-1zM178 974h1v1h-1zM178 979h1v1h-1zM178 983h1v1h-1zM178 988h1v1h-1zM353 767h1v1h-1zM353 772h1v1h-1zM353 776h1v1h-1zM353 781h1v1h-1zM353 785h1v1h-1zM353 790h1v1h-1zM353 794h1v1h-1zM353 799h1v1h-1zM353 803h1v1h-1zM353 808h1v1h-1zM353 812h1v1h-1zM353 817h1v1h-1zM353 821h1v1h-1zM353 826h1v1h-1zM353 830h1v1h-1zM353 835h1v1h-1zM353 839h1v1h-1zM353 844h1v1h-1zM353 848h1v1h-1zM353 853h1v1h-1zM353 857h1v1h-1zM353 862h1v1h-1zM353 866h1v1h-1zM353 871h1v1h-1zM353 875h1v1h-1zM353 880h1v1h-1zM353 884h1v1h-1zM353 889h1v1h-1zM353 893h1v1h-1zM353 898h1v1h-1zM353 902h1v1h-1zM353 907h1v1h-1zM353 911h1v1h-1zM353 916h1v1h-1zM353 920h1v1h-1zM353 925h1v1h-1zM353 929h1v1h-1zM353 934h1v1h-1zM353 938h1v1h-1zM353 943h1v1h-1zM353 947h1v1h-1zM353 952h1v1h-1zM353 956h1v1h-1zM353 961h1v1h-1zM353 965h1v1h-1zM353 970h1v1h-1zM353 974h1v1h-1zM353 979h1v1h-1zM353 983h1v1h-1zM353 988h1v1h-1zM527 767h1v1h-1zM527 772h1v1h-1zM527 776h1v1h-1zM527 781h1v1h-1zM527 785h1v1h-1zM527 790h1v1h-1zM527 794h1v1h-1zM527 799h1v1h-1zM527 803h1v1h-1zM527 808h1v1h-1zM527 812h1v1h-1zM527 817h1v1h-1zM527 821h1v1h-1zM527 826h1v1h-1zM527 830h1v1h-1zM527 835h1v1h-1zM527 839h1v1h-1zM527 844h1v1h-1zM527 848h1v1h-1zM527 853h1v1h-1zM527 857h1v1h-1zM527 862h1v1h-1zM527 866h1v1h-1zM527 871h1v1h-1zM527 875h1v1h-1zM527 880h1v1h-1zM527 884h1v1h-1zM527 889h1v1h-1zM527 893h1v1h-1zM527 898h1v1h-1zM527 902h1v1h-1zM527 907h1v1h-1zM527 911h1v1h-1zM527 916h1v1h-1zM527 920h1v1h-1zM527 925h1v1h-1zM527 929h1v1h-1zM527 934h1v1h-1zM527 938h1v1h-1zM527 943h1v1h-1zM527 947h1v1h-1zM527 952h1v1h-1zM527 956h1v1h-1zM527 961h1v1h-1zM527 965h1v1h-1zM527 970h1v1h-1zM527 974h1v1h-1zM527 979h1v1h-1zM527 983h1v1h-1zM527 988h1v1h-1zM702 767h1v1h-1zM702 772h1v1h-1zM702 776h1v1h-1zM702 781h1v1h-1zM702 785h1v1h-1zM702 790h1v1h-1zM702 794h1v1h-1zM702 799h1v1h-1zM702 803h1v1h-1zM702 808h1v1h-1zM702 812h1v1h-1zM702 817h1v1h-1zM702 821h1v1h-1zM702 826h1v1h-1zM702 830h1v1h-1zM702 835h1v1h-1zM702 839h1v1h-1zM702 844h1v1h-1zM702 848h1v1h-1zM702 853h1v1h-1zM702 857h1v1h-1zM702 862h1v1h-1zM702 866h1v1h-1zM702 871h1v1h-1zM702 875h1v1h-1zM702 880h1v1h-1zM702 884h1v1h-1zM702 889h1v1h-1zM702 893h1v1h-1zM702 898h1v1h-1zM702 902h1v1h-1zM702 907h1v1h-1zM702 911h1v1h-1zM702 916h1v1h-1zM702 920h1v1h-1zM702 925h1v1h-1zM702 929h1v1h-1zM702 934h1v1h-1zM702 938h1v1h-1zM702 943h1v1h-1zM702 947h1v1h-1zM702 952h1v1h-1zM702 956h1v1h-1zM702 961h1v1h-1zM702 965h1v1h-1zM702 970h1v1h-1zM702 974h1v1h-1zM702 979h1v1h-1zM702 983h1v1h-1zM702 988h1v1h-1zM877 767h1v1h-1zM877 772h1v1h-1zM877 776h1v1h-1zM877 781h1v1h-1zM877 785h1v1h-1zM877 790h1v1h-1zM877 794h1v1h-1zM877 799h1v1h-1zM877 803h1v1h-1zM877 808h1v1h-1zM877 812h1v1h-1zM877 817h1v1h-1zM877 821h1v1h-1zM877 826h1v1h-1zM877 830h1v1h-1zM877 835h1v1h-1zM877 839h1v1h-1zM877 844h1v1h-1zM877 848h1v1h-1zM877 853h1v1h-1zM877 857h1v1h-1zM877 862h1v1h-1zM877 866h1v1h-1zM877 871h1v1h-1zM877 875h1v1h-1zM877 880h1v1h-1zM877 884h1v1h-1zM877 889h1v1h-1zM877 893h1v1h-1zM877 898h1v1h-1zM877 902h1v1h-1zM877 907h1v1h-1zM877 911h1v1h-1zM877 916h1v1h-1zM877 920h1v1h-1zM877 925h1v1h-1zM877 929h1v1h-1zM877 934h1v1h-1zM877 938h1v1h-1zM877 943h1v1h-1zM877 947h1v1h-1zM877 952h1v1h-1zM877 956h1v1h-1zM877 961h1v1h-1zM877 965h1v1h-1zM877 970h1v1h-1zM877 974h1v1h-1zM877 979h1v1h-1zM877 983h1v1h-1zM877 988h1v1h-1zM1052 767h1v1h-1zM1052 772h1v1h-1zM1052 776h1v1h-1zM1052 781h1v1h-1zM1052 785h1v1h-1zM1052 790h1v1h-1zM1052 794h1v1h-1zM1052 799h1v1h-1zM1052 803h1v1h-1zM1052 808h1v1h-1zM1052 812h1v1h-1zM1052 817h1v1h-1zM1052 821h1v1h-1zM1052 826h1v1h-1zM1052 830h1v1h-1zM1052 835h1v1h-1zM1052 839h1v1h-1zM1052 844h1v1h-1zM1052 848h1v1h-1zM1052 853h1v1h-1zM1052 857h1v1h-1zM1052 862h1v1h-1zM1052 866h1v1h-1zM1052 871h1v1h-1zM1052 875h1v1h-1zM1052 880h1v1h-1zM1052 884h1v1h-1zM1052 889h1v1h-1zM1052 893h1v1h-1zM1052 898h1v1h-1zM1052 902h1v1h-1zM1052 907h1v1h-1zM1052 911h1v1h-1zM1052 916h1v1h-1zM1052 920h1v1h-1zM1052 925h1v1h-1zM1052 929h1v1h-1zM1052 934h1v1h-1zM1052 938h1v1h-1zM1052 943h1v1h-1zM1052 947h1v1h-1zM1052 952h1v1h-1zM1052 956h1v1h-1zM1052 961h1v1h-1zM1052 965h1v1h-1zM1052 970h1v1h-1zM1052 974h1v1h-1zM1052 979h1v1h-1zM1052 983h1v1h-1zM1052 988h1v1h-1zM1227 767h1v1h-1zM1227 772h1v1h-1zM1227 776h1v1h-1zM1227 781h1v1h-1zM1227 785h1v1h-1zM1227 790h1v1h-1zM1227 794h1v1h-1zM1227 799h1v1h-1zM1227 803h1v1h-1zM1227 808h1v1h-1zM1227 812h1v1h-1zM1227 817h1v1h-1zM1227 821h1v1h-1zM1227 826h1v1h-1zM1227 830h1v1h-1zM1227 835h1v1h-1zM1227 839h1v1h-1zM1227 844h1v1h-1zM1227 848h1v1h-1zM1227 853h1v1h-1zM1227 857h1v1h-1zM1227 862h1v1h-1zM1227 866h1v1h-1zM1227 871h1v1h-1zM1227 875h1v1h-1zM1227 880h1v1h-1zM1227 884h1v1h-1zM1227 889h1v1h-1zM1227 893h1v1h-1zM1227 898h1v1h-1zM1227 902h1v1h-1zM1227 907h1v1h-1zM1227 911h1v1h-1zM1227 916h1v1h-1zM1227 920h1v1h-1zM1227 925h1v1h-1zM1227 929h1v1h-1zM1227 934h1v1h-1zM1227 938h1v1h-1zM1227 943h1v1h-1zM1227 947h1v1h-1zM1227 952h1v1h-1zM1227 956h1v1h-1zM1227 961h1v1h-1zM1227 965h1v1h-1zM1227 970h1v1h-1zM1227 974h1v1h-1zM1227 979h1v1h-1zM1227 983h1v1h-1zM1227 988h1v1h-1zM1401 767h1v1h-1zM1401 772h1v1h-1zM1401 776h1v1h-1zM1401 781h1v1h-1zM1401 785h1v1h-1zM1401 790h1v1h-1zM1401 794h1v1h-1zM1401 799h1v1h-1zM1401 803h1v1h-1zM1401 808h1v1h-1zM1401 812h1v1h-1zM1401 817h1v1h-1zM1401 821h1v1h-1zM1401 826h1v1h-1zM1401 830h1v1h-1zM1401 835h1v1h-1zM1401 839h1v1h-1zM1401 844h1v1h-1zM1401 848h1v1h-1zM1401 853h1v1h-1zM1401 857h1v1h-1zM1401 862h1v1h-1zM1401 866h1v1h-1zM1401 871h1v1h-1zM1401 875h1v1h-1zM1401 880h1v1h-1zM1401 884h1v1h-1zM1401 889h1v1h-1zM1401 893h1v1h-1zM1401 898h1v1h-1zM1401 902h1v1h-1zM1401 907h1v1h-1zM1401 911h1v1h-1zM1401 916h1v1h-1zM1401 920h1v1h-1zM1401 925h1v1h-1zM1401 929h1v1h-1zM1401 934h1v1h-1zM1401 938h1v1h-1zM1401 943h1v1h-1zM1401 947h1v1h-1zM1401 952h1v1h-1zM1401 956h1v1h-1zM1401 961h1v1h-1zM1401 965h1v1h-1zM1401 970h1v1h-1zM1401 974h1v1h-1zM1401 979h1v1h-1zM1401 983h1v1h-1zM1401 988h1v1h-1zM1576 767h1v1h-1zM1576 772h1v1h-1zM1576 776h1v1h-1zM1576 781h1v1h-1zM1576 785h1v1h-1zM1576 790h1v1h-1zM1576 794h1v1h-1zM1576 799h1v1h-1zM1576 803h1v1h-1zM1576 808h1v1h-1zM1576 812h1v1h-1zM1576 817h1v1h-1zM1576 821h1v1h-1zM1576 826h1v1h-1zM1576 830h1v1h-1zM1576 835h1v1h-1zM1576 839h1v1h-1zM1576 844h1v1h-1zM1576 848h1v1h-1zM1576 853h1v1h-1zM1576 857h1v1h-1zM1576 862h1v1h-1zM1576 866h1v1h-1zM1576 871h1v1h-1zM1576 875h1v1h-1zM1576 880h1v1h-1zM1576 884h1v1h-1zM1576 889h1v1h-1zM1576 893h1v1h-1zM1576 898h1v1h-1zM1576 902h1v1h-1zM1576 907h1v1h-1zM1576 911h1v1h-1zM1576 916h1v1h-1zM1576 920h1v1h-1zM1576 925h1v1h-1zM1576 929h1v1h-1zM1576 934h1v1h-1zM1576 938h1v1h-1zM1576 943h1v1h-1zM1576 947h1v1h-1zM1576 952h1v1h-1zM1576 956h1v1h-1zM1576 961h1v1h-1zM1576 965h1v1h-1zM1576 970h1v1h-1zM1576 974h1v1h-1zM1576 979h1v1h-1zM1576 983h1v1h-1zM1576 988h1v1h-1z" fill="#b0b0b0"/>
<path d="M3 767h1v1h-1zM3 772h1v1h-1zM3 776h1v1h-1zM3 781h1v1h-1zM3 785h1v1h-1zM3 790h1v1h-1zM3 794h1v1h-1zM3 799h1v1h-1zM3 803h1v1h-1zM3 808h1v1h-1zM3 812h1v1h-1zM3 817h1v1h-1zM3 821h1v1h-1zM3 826h1v1h-1zM3 830h1v1h-1zM3 835h1v1h-1zM3 839h1v1h-1zM3 844h1v1h-1zM3 848h1v1h-1zM3 853h1v1h-1zM3 857h1v1h-1zM3 862h1v1h-1zM3 866h1v1h-1zM3 871h1v1h-1zM3 875h1v1h-1zM3 880h1v1h-1zM3 884h1v1h-1zM3 889h1v1h-1zM3 893h1v1h-1zM3 898h1v1h-1zM3 902h1v1h-1zM3 907h1v1h-1zM3 911h1v1h-1zM3 916h1v1h-1zM3 920h1v1h-1zM3 925h1v1h-1zM3 929h1v1h-1zM3 934h1v1h-1zM3 938h1v1h-1zM3 943h1v1h-1zM3 947h1v1h-1zM3 952h1v1h-1zM3 956h1v1h-1zM3 961h1v1h-1zM3 965h1v1h-1zM3 970h1v1h-1zM3 974h1v1h-1zM3 979h1v1h-1zM3 983h1v1h-1zM3 988h1v1h-1z" fill="#808080"/>
<rect x="3" y="765" width="1748" height="2" fill="#7a7a7a"/>
<line x1="45" y1="652.5" x2="1722" y2="652.5" stroke="#a0a4c0" stroke-width="1" stroke-dasharray="5 5"/>
<line x1="65" y1="880.5" x2="1712" y2="880.5" stroke="#c8c8c8" stroke-width="1" stroke-dasharray="6 4"/>
<line x1="877.5" y1="580" x2="877.5" y2="992" stroke="#b0b0b0" stroke-width="1" stroke-dasharray="5 5"/>
<clipPath id="lc"><rect x="3" y="767" width="1748" height="225"/></clipPath>
<polyline points="3.0,810.0 67.0,810.0 68.0,815.0 69.5,850.0 71.0,925.0 74.5,1000.0 82.0,1000.0 87.5,925.0 90.0,910.0 91.0,913.1 92.0,917.6 93.0,923.2 94.0,929.5 95.0,936.1 96.0,942.5 97.0,948.4 98.0,953.6 99.0,957.9 100.0,961.1 101.0,963.2 102.0,964.2 103.0,964.1 104.0,963.1 105.0,961.4 106.0,959.1 107.0,956.3 108.0,953.4 109.0,950.5 110.0,947.7 111.0,945.1 112.0,943.0 113.0,941.3 114.0,940.1 115.0,939.4 116.0,939.2 117.0,939.4 118.0,940.1 119.0,941.0 120.0,942.1 121.0,943.4 122.0,944.8 123.0,946.1 124.0,947.3 125.0,948.4 126.0,949.2 127.0,949.9 128.0,950.3 129.0,950.5 130.0,950.5 131.0,950.3 132.0,949.9 133.0,949.5 134.0,948.9 135.0,948.3 136.0,947.7 137.0,947.1 138.0,946.6 139.0,946.2 140.0,945.8 141.0,945.6 142.0,945.4 143.0,945.4 144.0,945.5 145.0,945.6 146.0,945.8 147.0,946.0 148.0,946.3 149.0,946.5 150.0,946.8 151.0,947.1 152.0,947.3 153.0,947.5 154.0,947.6 155.0,947.7 156.0,947.7 157.0,947.7 158.0,947.7 159.0,947.6 160.0,947.5 161.0,947.4 162.0,947.3 163.0,947.1 164.0,947.0 165.0,946.9 166.0,946.8 167.0,946.8 168.0,946.7 169.0,946.7 532.0,947.0 532.0,947.0 533.0,945.1 534.0,939.4 535.0,930.4 536.0,918.7 537.0,905.2 538.0,890.8 539.0,876.6 540.0,863.5 541.0,852.6 542.0,844.5 543.0,840.0 543.7,839.0 544.7,842.4 545.7,847.4 546.7,853.7 547.7,860.6 548.7,867.9 549.7,874.9 550.7,881.3 551.7,886.9 552.7,891.5 553.7,894.8 554.7,896.8 555.7,897.6 556.7,897.3 557.7,896.0 558.7,893.9 559.7,891.2 560.7,888.1 561.7,884.9 562.7,881.6 563.7,878.6 564.7,876.0 565.7,873.8 566.7,872.2 567.7,871.1 568.7,870.6 569.7,870.6 570.7,871.1 571.7,872.0 572.7,873.2 573.7,874.5 574.7,876.0 575.7,877.4 576.7,878.8 577.7,880.1 578.7,881.1 579.7,881.9 580.7,882.5 581.7,882.8 582.7,882.8 583.7,882.6 584.7,882.3 585.7,881.8 586.7,881.2 587.7,880.5 588.7,879.9 589.7,879.2 590.7,878.6 591.7,878.2 592.7,877.8 593.7,877.5 594.7,877.3 595.7,877.3 596.7,877.3 597.7,877.5 598.7,877.7 599.7,877.9 600.7,878.2 601.7,878.5 602.7,878.8 603.7,879.1 604.7,879.3 605.7,879.5 606.7,879.7 607.7,879.7 608.7,879.8 609.7,879.8 610.7,879.7 611.7,879.6 612.7,879.5 613.7,879.4 614.7,879.2 615.7,879.1 616.7,879.0 617.7,878.9 618.7,878.8 619.7,878.7 620.7,878.7 621.7,878.6 622.7,878.6 999.3,879.0 999.3,879.0 1000.3,876.6 1001.3,869.7 1002.3,858.9 1003.3,845.0 1004.3,829.5 1005.3,813.6 1006.3,798.8 1007.3,786.3 1008.3,777.3 1009.3,772.6 1009.8,772.0 1010.8,775.2 1011.8,780.0 1012.8,785.9 1013.8,792.6 1014.8,799.4 1015.8,806.1 1016.8,812.2 1017.8,817.5 1018.8,821.8 1019.8,825.0 1020.8,826.9 1021.8,827.7 1022.8,827.4 1023.8,826.2 1024.8,824.2 1025.8,821.6 1026.8,818.7 1027.8,815.6 1028.8,812.5 1029.8,809.7 1030.8,807.2 1031.8,805.1 1032.8,803.5 1033.8,802.5 1034.8,802.0 1035.8,802.0 1036.8,802.5 1037.8,803.3 1038.8,804.4 1039.8,805.7 1040.8,807.1 1041.8,808.5 1042.8,809.8 1043.8,811.0 1044.8,812.0 1045.8,812.8 1046.8,813.3 1047.8,813.6 1048.8,813.6 1049.8,813.5 1050.8,813.1 1051.8,812.6 1052.8,812.1 1053.8,811.5 1054.8,810.8 1055.8,810.2 1056.8,809.7 1057.8,809.2 1058.8,808.8 1059.8,808.6 1060.8,808.4 1061.8,808.4 1062.8,808.4 1063.8,808.5 1064.8,808.7 1065.8,809.0 1066.8,809.3 1067.8,809.6 1068.8,809.8 1069.8,810.1 1070.8,810.3 1071.8,810.5 1072.8,810.6 1073.8,810.7 1074.8,810.7 1075.8,810.7 1076.8,810.7 1077.8,810.6 1078.8,810.5 1079.8,810.4 1080.8,810.2 1081.8,810.1 1082.8,810.0 1083.8,809.9 1084.8,809.8 1085.8,809.7 1086.8,809.7 1087.8,809.7 1088.8,809.7 1466.0,810.0 1467.0,815.0 1468.5,850.0 1470.0,925.0 1473.5,1000.0 1481.0,1000.0 1486.5,925.0 1489.0,910.0 1490.0,913.1 1491.0,917.6 1492.0,923.2 1493.0,929.5 1494.0,936.1 1495.0,942.5 1496.0,948.4 1497.0,953.6 1498.0,957.9 1499.0,961.1 1500.0,963.2 1501.0,964.2 1502.0,964.1 1503.0,963.1 1504.0,961.4 1505.0,959.1 1506.0,956.3 1507.0,953.4 1508.0,950.5 1509.0,947.7 1510.0,945.1 1511.0,943.0 1512.0,941.3 1513.0,940.1 1514.0,939.4 1515.0,939.2 1516.0,939.4 1517.0,940.1 1518.0,941.0 1519.0,942.1 1520.0,943.4 1521.0,944.8 1522.0,946.1 1523.0,947.3 1524.0,948.4 1525.0,949.2 1526.0,949.9 1527.0,950.3 1528.0,950.5 1529.0,950.5 1530.0,950.3 1531.0,949.9 1532.0,949.5 1533.0,948.9 1534.0,948.3 1535.0,947.7 1536.0,947.1 1537.0,946.6 1538.0,946.2 1539.0,945.8 1540.0,945.6 1541.0,945.4 1542.0,945.4 1543.0,945.5 1544.0,945.6 1545.0,945.8 1546.0,946.0 1547.0,946.3 1548.0,946.5 1549.0,946.8 1550.0,947.1 1551.0,947.3 1552.0,947.5 1553.0,947.6 1554.0,947.7 1555.0,947.7 1556.0,947.7 1557.0,947.7 1558.0,947.6 1559.0,947.5 1560.0,947.4 1561.0,947.3 1562.0,947.1 1563.0,947.0 1564.0,946.9 1565.0,946.8 1566.0,946.8 1567.0,946.7 1568.0,946.7 1751.0,947.0" fill="none" stroke="#bcac2e" stroke-width="1.2" clip-path="url(#lc)"/>
<rect x="76" y="767" width="4.5" height="225" fill="#9c912a"/>
<rect x="1474.5" y="767" width="4.5" height="225" fill="#9c912a"/>
</svg>
<div class="t" style="right:174px;top:96px;font-size:13.5px;color:#ece232;text-align:right;background:#000;padding:0 1px;">-16 dBm</div>
<div class="t" style="right:174px;top:141px;font-size:13.5px;color:#ece232;text-align:right;background:#000;padding:0 1px;">-26 dBm</div>
<div class="t" style="right:174px;top:186px;font-size:13.5px;color:#ece232;text-align:right;background:#000;padding:0 1px;">-36 dBm</div>
<div class="t" style="right:174px;top:231px;font-size:13.5px;color:#ece232;text-align:right;background:#000;padding:0 1px;">-46 dBm</div>
<div class="t" style="right:174px;top:276px;font-size:13.5px;color:#ece232;text-align:right;background:#000;padding:0 1px;">-56 dBm</div>
<div class="t" style="right:174px;top:322px;font-size:13.5px;color:#ece232;text-align:right;background:#000;padding:0 1px;">-66 dBm</div>
<div class="t" style="right:174px;top:367px;font-size:13.5px;color:#ece232;text-align:right;background:#000;padding:0 1px;">-76 dBm</div>
<div class="t" style="right:174px;top:412px;font-size:13.5px;color:#ece232;text-align:right;background:#000;padding:0 1px;">-86 dBm</div>
<div class="t" style="left:32px;top:492px;font-size:13px;color:#ece232;background:#000;padding:0 1px;">2.440 GHz</div>
<div class="t" style="right:194px;top:492px;font-size:13px;color:#ece232;text-align:right;background:#000;padding:0 1px;">2.450 GHz</div>
<svg class="a" style="left:5px;top:56px" width="40" height="30"><path d="M1 1H35L23 13H1Z" fill="#1c1a08" stroke="#fff23a" stroke-width="1.6"/><rect x="1" y="13" width="22" height="14" fill="#fff23a"/></svg>
<div class="t" style="left:10px;top:58px;font-size:11px;color:#ece232;">C 1</div>
<div class="t" style="left:11px;top:71px;font-size:11px;color:#202010;">N</div>
<svg class="a" style="left:333px;top:57px" width="25" height="27"><path d="M0.5 0H23.5L12 26Z" fill="#ff2026"/></svg>
<div class="t" style="left:340px;top:61px;font-size:11px;color:#ffffff;">R</div>
<div class="t" style="left:348px;top:76px;font-size:13px;color:#ff2828;">2.44225 GHz</div>
<div class="t" style="left:348px;top:90px;font-size:13px;color:#ff2828;">-9.24 dBm</div>
<div class="t" style="right:198px;top:556px;font-size:13px;color:#ece232;text-align:right;">128</div>
<div class="t" style="right:174px;top:579px;font-size:13px;color:#1e1e10;text-align:right;">96 mV</div>
<div class="t" style="right:174px;top:601px;font-size:13px;color:#1e1e10;text-align:right;">64 mV</div>
<div class="t" style="right:174px;top:624px;font-size:13px;color:#1e1e10;text-align:right;">32 mV</div>
<div class="t" style="right:174px;top:669px;font-size:13px;color:#1e1e10;text-align:right;">-32 mV</div>
<div class="t" style="right:174px;top:691px;font-size:13px;color:#1e1e10;text-align:right;">-64 mV</div>
<div class="t" style="right:174px;top:714px;font-size:13px;color:#1e1e10;text-align:right;">-96 mV</div>
<div class="t" style="right:174px;top:736px;font-size:13px;color:#ece232;text-align:right;">-128 mV</div>
<svg class="a" style="left:1708px;top:545px" width="40" height="40"><path d="M2 2H34Q36 2 36 4V36Z" fill="#555555"/><circle cx="29" cy="8.5" r="4.3" fill="none" stroke="#9a9a9a" stroke-width="1.8"/><path d="M26 11.5L20.5 17" stroke="#9a9a9a" stroke-width="2.4" stroke-linecap="round"/></svg>
<svg class="a" style="left:1726px;top:640px" width="26" height="26"><path d="M2.5 12.5L15.5 2.5V10.5H25V14.5H15.5V22.5Z" fill="#fff23a" stroke="#111" stroke-width="1.2" stroke-linejoin="round"/></svg>
<svg class="a" style="left:6px;top:640px" width="38" height="26"><path d="M1.5 3Q1.5 1 3.5 1H23L35 12.5L23 24H3.5Q1.5 24 1.5 22Z" fill="#1c1a08"/></svg>
<div class="t" style="left:15px;top:646px;font-size:12px;color:#ece232;">C 1</div>
<div class="a" style="left:1591px;top:746px;width:160px;height:19px;box-sizing:border-box;border:1px solid #e8de30;border-right:none;background:#302a0e"></div>
<div class="t" style="right:174px;top:784px;font-size:13px;color:#bcac30;text-align:right;background:#000;padding:0 1px;">4 MHz</div>
<div class="t" style="right:174px;top:806px;font-size:13px;color:#bcac30;text-align:right;background:#000;padding:0 1px;">3 MHz</div>
<div class="t" style="right:174px;top:829px;font-size:13px;color:#bcac30;text-align:right;background:#000;padding:0 1px;">2 MHz</div>
<div class="t" style="right:174px;top:851px;font-size:13px;color:#bcac30;text-align:right;background:#000;padding:0 1px;">1 MHz</div>
<div class="t" style="right:174px;top:874px;font-size:13px;color:#bcac30;text-align:right;background:#000;padding:0 1px;">0 Hz</div>
<div class="t" style="right:174px;top:896px;font-size:13px;color:#bcac30;text-align:right;background:#000;padding:0 1px;">-1 MHz</div>
<div class="t" style="right:174px;top:919px;font-size:13px;color:#bcac30;text-align:right;background:#000;padding:0 1px;">-2 MHz</div>
<div class="t" style="right:174px;top:941px;font-size:13px;color:#bcac30;text-align:right;">-3 MHz</div>
<div class="t" style="right:174px;top:964px;font-size:13px;color:#bcac30;text-align:right;background:#000;padding:0 1px;">-4 MHz</div>
<svg class="a" style="left:6px;top:866px" width="56" height="27"><path d="M1.5 3Q1.5 1.5 3.5 1.5H42L53 13.5L42 25.5H3.5Q1.5 25.5 1.5 23.5Z" fill="#9c9328"/></svg>
<div class="t" style="left:19px;top:873px;font-size:12px;color:#1a1a10;">C 1-ƒ</div>
<div class="t" style="left:178px;top:975px;width:200px;margin-left:-100px;text-align:center;font-size:13px;color:#c8c8c8"><span style="background:#000;padding:0 1px">-8 ms</span></div>
<div class="t" style="left:353px;top:975px;width:200px;margin-left:-100px;text-align:center;font-size:13px;color:#c8c8c8"><span style="background:#000;padding:0 1px">-6 ms</span></div>
<div class="t" style="left:528px;top:975px;width:200px;margin-left:-100px;text-align:center;font-size:13px;color:#c8c8c8"><span style="background:#000;padding:0 1px">-4 ms</span></div>
<div class="t" style="left:703px;top:975px;width:200px;margin-left:-100px;text-align:center;font-size:13px;color:#c8c8c8"><span style="background:#000;padding:0 1px">-2 ms</span></div>
<div class="t" style="left:878px;top:975px;width:200px;margin-left:-100px;text-align:center;font-size:13px;color:#c8c8c8"><span style="padding:0 1px">0 s</span></div>
<div class="t" style="left:1052px;top:975px;width:200px;margin-left:-100px;text-align:center;font-size:13px;color:#c8c8c8"><span style="background:#000;padding:0 1px">2 ms</span></div>
<div class="t" style="left:1227px;top:975px;width:200px;margin-left:-100px;text-align:center;font-size:13px;color:#c8c8c8"><span style="background:#000;padding:0 1px">4 ms</span></div>
<div class="t" style="left:1402px;top:975px;width:200px;margin-left:-100px;text-align:center;font-size:13px;color:#c8c8c8"><span style="background:#000;padding:0 1px">6 ms</span></div>
<div class="t" style="left:1577px;top:975px;width:200px;margin-left:-100px;text-align:center;font-size:13px;color:#c8c8c8"><span style="background:#000;padding:0 1px">8 ms</span></div>
<svg class="a" style="left:580px;top:515px" width="600" height="26"><path d="M13.5 4.5H6.5V21H13.5M6.5 13H587.5M580.5 4.5H587.5V21H580.5" fill="none" stroke="#d0d0d0" stroke-width="1.5"/></svg>
<svg class="a" style="left:867px;top:515px" width="21" height="26"><path d="M3 1H18L10.5 6Z" fill="#f08a22"/><path d="M4 7.5H17V19H13L10.5 23L8 19H4Z" fill="#111" stroke="#f08a22" stroke-width="1.6"/><path d="M7.5 10.5H13.5M10.5 10.5V17" stroke="#f08a22" stroke-width="1.6"/></svg>
<svg class="a" style="left:866px;top:540px" width="23" height="38"><path d="M1 0H22L11.5 10Z" fill="#f08a22"/><path d="M2 11H21V30H15L11.5 36L8 30H2Z" fill="#000" stroke="#f08a22" stroke-width="2"/><path d="M7 16.5H16M11.5 16.5V27" stroke="#f08a22" stroke-width="2"/></svg>
<svg class="a" style="left:1758px;top:500px" width="8" height="24"><circle cx="4" cy="3.5" r="2" fill="#b8b8b8"/><circle cx="4" cy="12" r="2" fill="#b8b8b8"/><circle cx="4" cy="20.5" r="2" fill="#b8b8b8"/></svg>
<div class="a" style="left:1769px;top:29px;width:151px;height:965px;box-sizing:border-box;border:1px solid #5e5a58;border-right:none;border-top-color:#6a625a;"></div>
<div class="t" style="left:1785px;top:1px;font-size:29px;font-weight:bold;color:#fff;letter-spacing:-1.4px">Tektronix</div><svg class="a" style="left:1815px;top:9px" width="18" height="18"><path d="M11.5 0H16.5L5 17H0Z" fill="#22b8d8"/></svg>
<div class="t" style="left:1806px;top:31px;font-size:15px;font-weight:bold;color:#e8e8e8">Add New...</div>
<div class="btn" style="left:1777px;top:54px;width:63px;height:37px;font-size:15.5px;display:flex;align-items:center;justify-content:center;line-height:1;padding-bottom:3px">Cursors</div>
<div class="btn" style="left:1849px;top:54px;width:63px;height:37px;font-size:15.5px;display:flex;align-items:center;justify-content:center;line-height:1;padding-bottom:3px">Callout</div>
<div class="btn" style="left:1777px;top:100px;width:63px;height:37px;font-size:15.5px;display:flex;align-items:center;justify-content:center;line-height:1;padding-bottom:3px">Measure</div>
<div class="btn" style="left:1849px;top:100px;width:63px;height:37px;font-size:15.5px;display:flex;align-items:center;justify-content:center;line-height:1;padding-bottom:3px">Search</div>
<div class="btn" style="left:1777px;top:146px;width:63px;height:37px;font-size:15px;display:flex;align-items:center;justify-content:center;line-height:16px;padding-bottom:3px">Results<br>Table</div>
<div class="btn" style="left:1849px;top:146px;width:63px;height:37px;font-size:15.5px;display:flex;align-items:center;justify-content:center;line-height:1;padding-bottom:3px">Plot</div>
<div class="a" style="left:1773px;top:189px;width:144px;height:1px;background:#5a5550"></div>
<div class="btn" style="left:1777px;top:196px;width:63px;height:37px"></div>
<svg class="a" style="left:1794px;top:200px" width="32" height="30"><rect x="3.5" y="3.5" width="22" height="18.5" fill="none" stroke="#c0c0c0" stroke-width="2" stroke-dasharray="3 2.2"/><circle cx="16" cy="10" r="4.6" fill="none" stroke="#c8c8c8" stroke-width="1.8"/><path d="M12.5 13.5L8.5 17.5" stroke="#c8c8c8" stroke-width="2.6" stroke-linecap="round"/><path d="M20 16.5L28 23.5L24.5 23.8L26.5 27.5L24.8 28.3L22.8 24.6L20.3 26.8Z" fill="#c8c8c8"/></svg>
<div class="btn" style="left:1849px;top:196px;width:63px;height:37px;font-size:15.5px;display:flex;align-items:center;justify-content:center;line-height:1;padding-bottom:3px">More...</div>
<div class="a" style="left:1773px;top:241px;width:144px;height:1px;background:#5a5550"></div>
<div class="badge" style="left:3px;top:999px;width:90px;height:79px;"><div style="position:absolute;left:0;top:0;width:100%;height:19px;background:#4a4522"></div><div style="position:absolute;left:0;top:19px;width:100%;height:1px;background:#a8a8a8"></div><div class="t" style="left:5px;top:2px;font-size:15px;color:#f4ec3a">Ch 1</div><div class="t" style="left:7px;top:23px;font-size:15px;color:#111">32 mV/div</div><div class="t" style="left:7px;top:42px;font-size:15px;color:#111">10 dBm/div</div><div class="t" style="left:7px;top:61px;font-size:15px;color:#111">8 GHz</div></div>
<div class="badge" style="left:98px;top:999px;width:90px;height:79px;"><div style="position:absolute;left:0;top:0;width:100%;height:19px;background:#9a8f28"></div><div style="position:absolute;left:0;top:19px;width:100%;height:1px;background:#a8a8a8"></div><div class="t" style="left:5px;top:2px;font-size:15px;color:#1a1a10">Ch 1 - ƒ</div><div class="t" style="left:7px;top:23px;font-size:15px;color:#111">1 MHz/div</div></div>
<div class="btn" style="left:701px;top:998px;width:40px;height:79px;border-radius:7px"><div style="position:absolute;left:4px;top:7px;width:32px;height:3px;background:#1ed8e6;border-radius:1px"></div><div class="t" style="left:0;top:0;width:40px;height:79px;display:flex;align-items:center;justify-content:center;font-size:22px;color:#e8e8e8;padding-top:6px;box-sizing:border-box">2</div></div>
<div class="btn" style="left:746px;top:998px;width:40px;height:79px;border-radius:7px"><div style="position:absolute;left:4px;top:7px;width:32px;height:3px;background:#ff3a5a;border-radius:1px"></div><div class="t" style="left:0;top:0;width:40px;height:79px;display:flex;align-items:center;justify-content:center;font-size:22px;color:#e8e8e8;padding-top:6px;box-sizing:border-box">3</div></div>
<div class="btn" style="left:791px;top:998px;width:40px;height:79px;border-radius:7px"><div style="position:absolute;left:4px;top:7px;width:32px;height:3px;background:#92e024;border-radius:1px"></div><div class="t" style="left:0;top:0;width:40px;height:79px;display:flex;align-items:center;justify-content:center;font-size:22px;color:#e8e8e8;padding-top:6px;box-sizing:border-box">4</div></div>
<div class="a" style="left:841px;top:998px;width:1px;height:79px;background:#5e5852"></div>
<div class="btn" style="left:852px;top:998px;width:40px;height:79px;border-radius:7px"><div style="position:absolute;left:4px;top:7px;width:32px;height:3px;background:#ff8c1e;border-radius:1px"></div><div class="t" style="left:0;top:19px;width:40px;text-align:center;font-size:16px;line-height:16px;color:#e8e8e8;white-space:normal">Add New Math</div></div>
<div class="btn" style="left:897px;top:998px;width:40px;height:79px;border-radius:7px"><div style="position:absolute;left:4px;top:7px;width:32px;height:3px;background:#c8c8dc;border-radius:1px"></div><div class="t" style="left:0;top:19px;width:40px;text-align:center;font-size:16px;line-height:16px;color:#e8e8e8;white-space:normal">Add New Ref</div></div>
<div class="btn" style="left:942px;top:998px;width:40px;height:79px;border-radius:7px"><div style="position:absolute;left:4px;top:7px;width:32px;height:3px;background:#c050ff;border-radius:1px"></div><div class="t" style="left:0;top:19px;width:40px;text-align:center;font-size:16px;line-height:16px;color:#e8e8e8;white-space:normal">Add New Bus</div></div>
<div class="a" style="left:992px;top:998px;width:1px;height:79px;background:#5e5852"></div>
<div class="btn" style="left:1003px;top:998px;width:40px;height:79px;border-radius:7px"><div style="position:absolute;left:4px;top:7px;width:32px;height:3px;background:#4a4a4a;border-radius:1px"></div><div class="t" style="left:0;top:0;width:40px;height:79px;display:flex;align-items:center;justify-content:center;font-size:16px;color:#e8e8e8;padding-top:6px;box-sizing:border-box">DVM</div></div>
<div class="btn" style="left:1053px;top:998px;width:40px;height:79px;border-radius:7px"><div style="position:absolute;left:4px;top:7px;width:32px;height:3px;background:#4a4a4a;border-radius:1px"></div><div class="t" style="left:0;top:0;width:40px;height:79px;display:flex;align-items:center;justify-content:center;font-size:16px;color:#e8e8e8;padding-top:6px;box-sizing:border-box">AFG</div></div>
<div class="a" style="left:1103px;top:998px;width:1px;height:79px;background:#5e5852"></div>
<div class="badge" style="left:1116px;top:999px;width:158px;height:78px;"><div style="position:absolute;left:0;top:0;width:100%;height:19px;background:#555555"></div><div style="position:absolute;left:0;top:19px;width:100%;height:1px;background:#9a9a9a"></div><div class="t" style="left:5px;top:2px;font-size:16px;color:#e8e8e8">Spectrum</div><div class="t" style="left:6px;top:24px;font-size:15px;color:#111">CF: 2.44530000 GHz</div><div class="t" style="left:6px;top:43px;font-size:15px;color:#111">Span: 10.0000 MHz</div><div class="t" style="left:6px;top:62px;font-size:15px;color:#111">RBW: 1.00 kHz</div></div>
<div class="badge" style="left:1281px;top:999px;width:198px;height:78px;"><div style="position:absolute;left:0;top:0;width:100%;height:19px;background:#555555"></div><div style="position:absolute;left:0;top:19px;width:100%;height:1px;background:#9a9a9a"></div><div class="t" style="left:5px;top:2px;font-size:16px;color:#e8e8e8">Horizontal</div><div class="t" style="left:6px;top:24px;font-size:15px;color:#111">2 ms/div</div><div class="t" style="left:111px;top:24px;font-size:15px;color:#111">20 ms</div><div class="t" style="left:6px;top:43px;font-size:15px;color:#111">SR: 62.5 MS/s</div><div class="t" style="left:111px;top:43px;font-size:15px;color:#111">16 ns/pt</div><div class="t" style="left:6px;top:62px;font-size:15px;color:#111">RL: 1.25 Mpts</div><div class="t" style="left:138px;top:62px;font-size:15px;color:#111">50%</div><svg style="position:absolute;left:112px;top:61px" width="12" height="16"><path d="M1 1H10V10H7L5.5 13L4 10H1Z" fill="#111" stroke="#f08a22" stroke-width="1.5"/><path d="M3.5 3.5H7.5M5.5 3.5V8" stroke="#fff" stroke-width="1.2"/></svg></div>
<div class="badge" style="left:1486px;top:999px;width:158px;height:78px;"><div style="position:absolute;left:0;top:0;width:100%;height:19px;background:#555555"></div><div style="position:absolute;left:0;top:19px;width:100%;height:1px;background:#9a9a9a"></div><div class="t" style="left:5px;top:2px;font-size:16px;color:#e8e8e8">Trigger</div><div style="position:absolute;left:6px;top:23px;width:29px;height:16px;background:#fff23a;border:1px solid #333;border-radius:5px;box-sizing:border-box"></div><div class="t" style="left:16px;top:23px;font-size:15px;color:#111">1</div><svg style="position:absolute;left:45px;top:24px" width="20" height="16"><path d="M1 13H4L13 3H17" fill="none" stroke="#4a4aa0" stroke-width="1.3"/></svg><div class="t" style="left:76px;top:23px;font-size:15px;color:#111">0 V</div></div>
<div class="badge" style="left:1651px;top:999px;width:148px;height:78px;"><div style="position:absolute;left:0;top:0;width:100%;height:19px;background:#555555"></div><div style="position:absolute;left:0;top:19px;width:100%;height:1px;background:#9a9a9a"></div><div class="t" style="left:5px;top:2px;font-size:16px;color:#e8e8e8">Acquisition</div><div class="t" style="left:5px;top:23px;font-size:15px;color:#111">Auto,</div><div class="t" style="left:88px;top:23px;font-size:15px;color:#111">Analyze</div><div class="t" style="left:5px;top:42px;font-size:15px;color:#111">Sample: 12 bits</div><div class="t" style="left:5px;top:61px;font-size:15px;color:#111">Single: 1 /1</div></div>
<div class="a" style="left:1810px;top:998px;width:1px;height:79px;background:#5e5852"></div>
<div class="a" style="left:1822px;top:999px;width:89px;height:35px;background:#ff1e26;border-radius:6px;box-sizing:border-box;border:1px solid #8a5a5a"></div>
<div class="t" style="left:1822px;top:1008px;width:89px;text-align:center;font-size:13px;font-weight:bold;color:#fff">Stopped</div>
<div class="a" style="left:1822px;top:1042px;width:89px;height:35px;background:#c8c8c8;border-radius:5px"></div>
<div class="t" style="left:1822px;top:1042px;width:89px;text-align:center;font-size:15px;color:#111;line-height:18px;white-space:normal">19 Dec 2019<br>10:44:41 AM</div>
</body></html>
